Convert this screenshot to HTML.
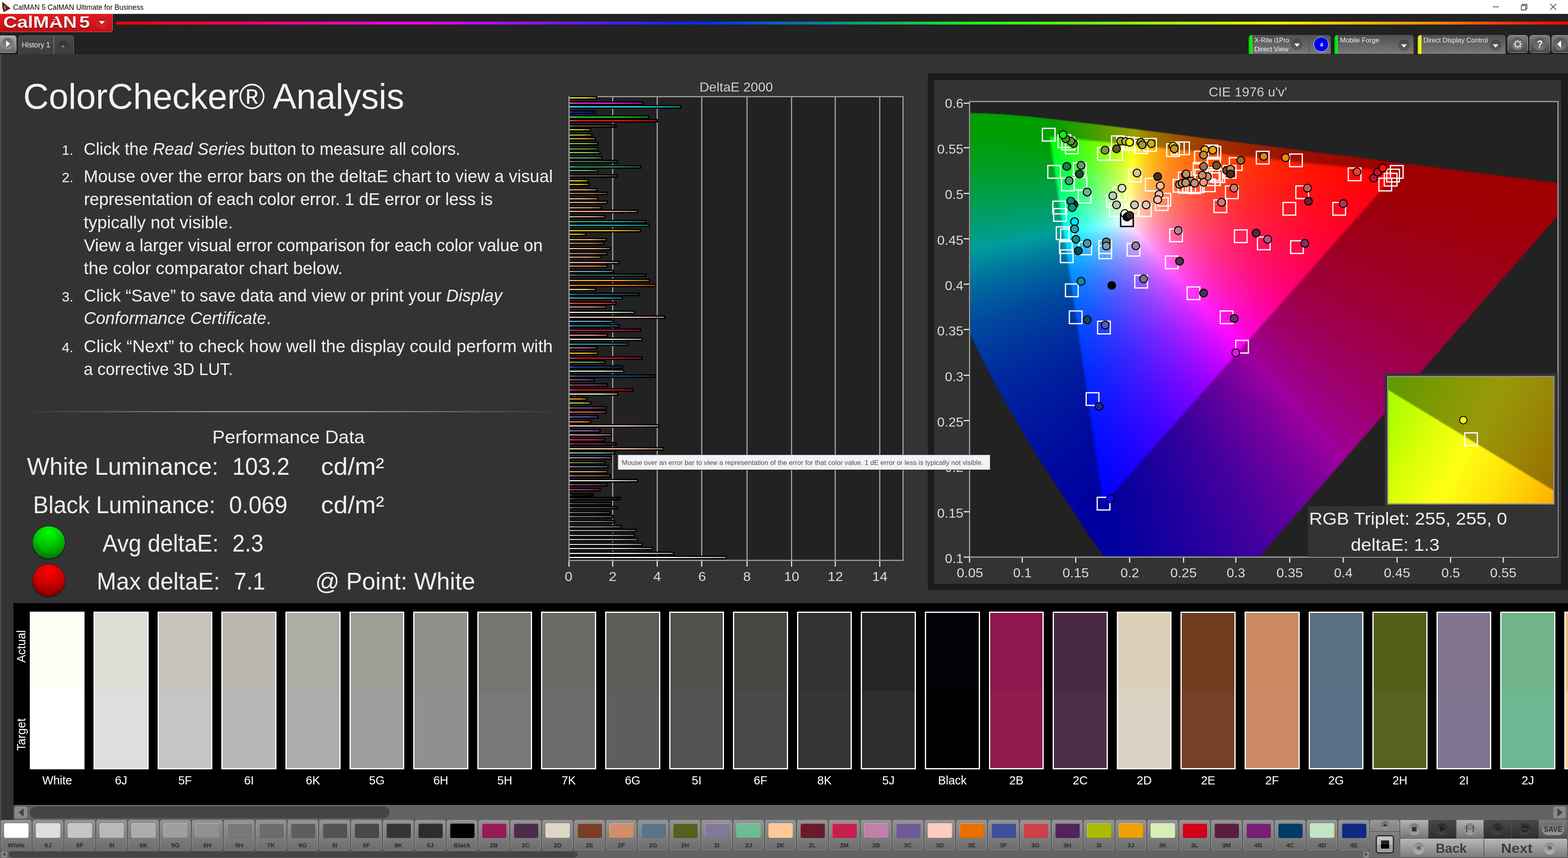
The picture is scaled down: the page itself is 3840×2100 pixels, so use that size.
<!DOCTYPE html>
<html lang="en"><head><meta charset="utf-8"><title>CalMAN 5 CalMAN Ultimate for Business</title>
<style>
html,body{margin:0;padding:0}
body{width:3840px;height:2100px;overflow:hidden;background:#333;position:relative;font-family:"Liberation Sans",sans-serif}
.t{position:absolute;white-space:nowrap;line-height:1;transform-origin:0 0}
.a{position:absolute}
i{font-style:italic}
</style></head><body>
<div class="a" style="left:0;top:0;width:3840px;height:34px;background:#fff"></div>
<svg class="a" style="left:3px;top:4px" width="24" height="26" viewBox="0 0 24 26">
<defs><linearGradient id="ic" x1="0" y1="0" x2="1" y2="1"><stop offset="0" stop-color="#2a1208"/><stop offset=".45" stop-color="#c8200c"/><stop offset=".7" stop-color="#7a1a08"/><stop offset="1" stop-color="#123a10"/></linearGradient></defs>
<path d="M3,1.5 L22,16.5 L6,25 Q2,14 3,1.5Z" fill="url(#ic)" stroke="#1a0c06" stroke-width="1"/>
<circle cx="8.8" cy="15.6" r="4.8" fill="#1c0d08"/></svg>
<div class="t" style="left:9.0px;top:14.9px;font-size:10px;color:#e8d8b0;font-weight:700;">5</div>
<div class="t" style="left:31.5px;top:8.6px;font-size:18px;color:#000;transform:scaleX(0.9708);">CalMAN 5 CalMAN Ultimate for Business</div>
<svg class="a" style="left:3640px;top:0" width="200" height="34" viewBox="0 0 200 34" fill="none" stroke="#111" stroke-width="1.3">
<path d="M16,16.8H31"/><path d="M85.5,13.5h11v11h-11z M88.5,13.5v-3h11v11h-3"/><path d="M156.5,9.5l14.5,14.5M171,9.5l-14.5,14.5"/></svg>
<div class="a" style="left:0;top:34px;width:3840px;height:99px;background:#222"></div>
<div class="a" style="left:285px;top:53px;width:3555px;height:7px;background:linear-gradient(90deg,#ff0000 0,#ff00e6 20%,#0028ff 40%,#1af01a 59%,#f4f000 80%,#ff8a08 90.6%,#ff2c06 96.2%,#ff0400 100%)"></div>
<div class="a" style="left:-2px;top:34px;width:276px;height:43.5px;border-radius:0 0 7px 7px;border:1.5px solid #e8787c;border-top:none;background:linear-gradient(180deg,#e01c22 0,#d4161c 45%,#c01016 100%);box-shadow:0 1px 2px #000"></div>
<div class="a" style="left:234.5px;top:40.5px;width:29.5px;height:29.5px;border-radius:50%;background:radial-gradient(circle at 50% 35%,#c8141a,#d62026 70%,#e0383c)"></div>
<svg class="a" style="left:241px;top:50px" width="17" height="11" viewBox="0 0 17 11"><path d="M1,1.5H16L8.5,9.5Z" fill="#fff"/></svg>
<div class="t" style="left:8.0px;top:33.9px;font-size:40.5px;color:#ececec;font-weight:700;transform:scaleX(1.1598);text-shadow:0 2px 2px rgba(90,0,0,.7);">CalMAN<span style="margin-left:5px">5</span></div>
<svg class="a" style="left:124px;top:37px" width="18" height="22" viewBox="0 0 18 22"><g fill="none" stroke="#c8181e" stroke-width="2.2" stroke-linecap="round"><circle cx="10.5" cy="3.2" r="1.6" fill="#c8181e" stroke="none"/><path d="M10,6.5L7.5,12l3.5,3-1.5,4.5M7.5,12L4,16.5M5,8l4.5-1.2 3.5,2.8"/></g></svg>
<div class="a" style="left:-4px;top:87px;width:42px;height:40px;border-radius:6px;border:1.5px solid #d8d8d8;background:linear-gradient(180deg,#a8a8a8,#666)"></div>
<div class="a" style="left:4.5px;top:92.5px;width:28px;height:28px;border-radius:50%;background:linear-gradient(180deg,#666,#8c8c8c)"></div>
<svg class="a" style="left:14px;top:98px" width="12" height="18" viewBox="0 0 12 18"><path d="M1,1L10.5,9 1,17Z" fill="#fff"/></svg>
<div class="a" style="left:44.5px;top:87px;width:136px;height:46px;border-radius:6px 6px 0 0;border:1.5px solid #6e6e6e;border-bottom:none;background:linear-gradient(180deg,#4a4a4a,#3c3c3c);box-sizing:border-box"></div>
<div class="a" style="left:131px;top:88px;width:1.5px;height:45px;background:#6e6e6e"></div>
<div class="a" style="left:140.5px;top:99.5px;width:28px;height:28px;border-radius:50%;background:linear-gradient(180deg,#333,#444)"></div>
<div class="t" style="left:53.3px;top:101.9px;font-size:17.6px;color:#e0e0e0;">History 1</div>
<div class="t" style="left:149.5px;top:105.1px;font-size:17px;color:#9a9a9a;">+</div>
<div class="a" style="left:3058px;top:86.3px;width:201px;height:46px;border-radius:7px 7px 0 0;background:linear-gradient(180deg,#505050,#7a7a7a);overflow:hidden;box-shadow:inset 0 1px 0 #6a6a6a"><div style="position:absolute;left:0;top:0;width:8.5px;height:46px;background:linear-gradient(90deg,#0c0,#1f1)"></div></div>
<div class="a" style="left:3205px;top:89px;width:1.5px;height:44px;background:#555"></div>
<div class="a" style="left:3162.3px;top:95.3px;width:28px;height:28px;border-radius:50%;background:linear-gradient(180deg,#444,#606060)"></div><svg class="a" style="left:3168.8px;top:106.3px" width="15" height="9" viewBox="0 0 15 9"><path d="M0.5,0.5H14.5L7.5,8.5Z" fill="#fff"/></svg>
<div class="a" style="left:3217px;top:90px;width:35px;height:35px;border-radius:50%;background:#0000f2;border:1.7px solid #fff"></div>
<div class="t" style="left:3232.4px;top:102.8px;font-size:13.5px;color:#fff;font-weight:700;">4</div>
<div class="t" style="left:3071.5px;top:91.4px;font-size:15.6px;color:#eee;transform:scaleX(1.0112);">X-Rite i1Pro</div>
<div class="t" style="left:3071.5px;top:113.2px;font-size:15.6px;color:#eee;transform:scaleX(1.0626);">Direct View</div>
<div class="a" style="left:3267.6px;top:86.3px;width:194.9000000000001px;height:46px;border-radius:7px 7px 0 0;background:linear-gradient(180deg,#505050,#7a7a7a);overflow:hidden;box-shadow:inset 0 1px 0 #6a6a6a"><div style="position:absolute;left:0;top:0;width:8.5px;height:46px;background:linear-gradient(90deg,#0c0,#1f1)"></div></div>
<div class="a" style="left:3424.3px;top:96.5px;width:28px;height:28px;border-radius:50%;background:linear-gradient(180deg,#444,#606060)"></div><svg class="a" style="left:3430.8px;top:107.5px" width="15" height="9" viewBox="0 0 15 9"><path d="M0.5,0.5H14.5L7.5,8.5Z" fill="#fff"/></svg>
<div class="t" style="left:3281.5px;top:91.4px;font-size:15.6px;color:#eee;transform:scaleX(1.0493);">Mobile Forge</div>
<div class="a" style="left:3472.2px;top:86.3px;width:214.80000000000018px;height:46px;border-radius:7px 7px 0 0;background:linear-gradient(180deg,#505050,#7a7a7a);overflow:hidden;box-shadow:inset 0 1px 0 #6a6a6a"><div style="position:absolute;left:0;top:0;width:8.5px;height:46px;background:linear-gradient(90deg,#dd0,#ff2)"></div></div>
<div class="a" style="left:3648.7px;top:96.5px;width:28px;height:28px;border-radius:50%;background:linear-gradient(180deg,#444,#606060)"></div><svg class="a" style="left:3655.2px;top:107.5px" width="15" height="9" viewBox="0 0 15 9"><path d="M0.5,0.5H14.5L7.5,8.5Z" fill="#fff"/></svg>
<div class="t" style="left:3485.6px;top:91.4px;font-size:15.6px;color:#eee;transform:scaleX(1.0458);">Direct Display Control</div>
<div class="a" style="left:3691.6px;top:86.3px;width:50.40000000000009px;height:42.4px;border-radius:7px;border:1.3px solid #b0b0b0;box-sizing:border-box;background:linear-gradient(180deg,#7c7c7c,#484848)"></div><div class="a" style="left:3701.4px;top:92.3px;width:31px;height:31px;border-radius:50%;background:linear-gradient(180deg,#555,#7a7a7a)"></div>
<div class="a" style="left:3745.6px;top:86.3px;width:50.40000000000009px;height:42.4px;border-radius:7px;border:1.3px solid #b0b0b0;box-sizing:border-box;background:linear-gradient(180deg,#7c7c7c,#484848)"></div><div class="a" style="left:3755.2px;top:92.3px;width:31px;height:31px;border-radius:50%;background:linear-gradient(180deg,#555,#7a7a7a)"></div>
<div class="a" style="left:3799.6px;top:86.3px;width:50.40000000000009px;height:42.4px;border-radius:7px;border:1.3px solid #b0b0b0;box-sizing:border-box;background:linear-gradient(180deg,#7c7c7c,#484848)"></div><div class="a" style="left:3805.7px;top:92.3px;width:31px;height:31px;border-radius:50%;background:linear-gradient(180deg,#555,#7a7a7a)"></div>
<svg class="a" style="left:3704.9px;top:95.8px" width="24" height="24" viewBox="-12 -12 24 24"><g fill="#cfcfcf"><rect x="-1.8" y="-10.4" width="3.6" height="4.4" transform="rotate(0)"/><rect x="-1.8" y="-10.4" width="3.6" height="4.4" transform="rotate(45)"/><rect x="-1.8" y="-10.4" width="3.6" height="4.4" transform="rotate(90)"/><rect x="-1.8" y="-10.4" width="3.6" height="4.4" transform="rotate(135)"/><rect x="-1.8" y="-10.4" width="3.6" height="4.4" transform="rotate(180)"/><rect x="-1.8" y="-10.4" width="3.6" height="4.4" transform="rotate(225)"/><rect x="-1.8" y="-10.4" width="3.6" height="4.4" transform="rotate(270)"/><rect x="-1.8" y="-10.4" width="3.6" height="4.4" transform="rotate(315)"/></g><circle r="6.2" fill="none" stroke="#cfcfcf" stroke-width="2.6"/></svg>
<div class="t" style="left:3763.9px;top:97.1px;font-size:23px;color:#f4f4f4;font-weight:700;">?</div>
<svg class="a" style="left:3812px;top:98px" width="12" height="20" viewBox="0 0 12 20"><path d="M11,1L1.5,10 11,19Z" fill="#fff"/></svg>
<div class="a" style="left:0;top:133px;width:3px;height:1967px;background:#4a4a4a"></div>
<div class="t" style="left:57.0px;top:192.3px;font-size:87px;color:#f2f2f2;transform:scaleX(0.9933);">ColorChecker® Analysis</div>
<div class="t" style="left:151.5px;top:350.5px;font-size:33.5px;color:#f0f0f0;">1.</div>
<div class="t" style="left:151.5px;top:418.4px;font-size:33.5px;color:#f0f0f0;">2.</div>
<div class="t" style="left:151.5px;top:710.1px;font-size:33.5px;color:#f0f0f0;">3.</div>
<div class="t" style="left:151.5px;top:834.4px;font-size:33.5px;color:#f0f0f0;">4.</div>
<div class="t" style="left:205.4px;top:343.5px;font-size:41.8px;color:#f0f0f0;transform:scaleX(0.9827);">Click the <i>Read Series</i> button to measure all colors.</div>
<div class="t" style="left:205.4px;top:411.4px;font-size:41.8px;color:#f0f0f0;transform:scaleX(1.0092);">Mouse over the error bars on the deltaE chart to view a visual</div>
<div class="t" style="left:205.4px;top:467.4px;font-size:41.8px;color:#f0f0f0;">representation of each color error. 1 dE error or less is</div>
<div class="t" style="left:205.4px;top:523.9px;font-size:41.8px;color:#f0f0f0;transform:scaleX(1.0211);">typically not visible.</div>
<div class="t" style="left:205.4px;top:579.9px;font-size:41.8px;color:#f0f0f0;">View a larger visual error comparison for each color value on</div>
<div class="t" style="left:205.4px;top:636.4px;font-size:41.8px;color:#f0f0f0;transform:scaleX(1.0264);">the color comparator chart below.</div>
<div class="t" style="left:205.4px;top:703.1px;font-size:41.8px;color:#f0f0f0;">Click “Save” to save data and view or print your <i>Display</i></div>
<div class="t" style="left:205.4px;top:758.1px;font-size:41.8px;color:#f0f0f0;transform:scaleX(0.9924);"><i>Conformance Certificate</i>.</div>
<div class="t" style="left:205.4px;top:827.4px;font-size:41.8px;color:#f0f0f0;transform:scaleX(1.0259);">Click “Next” to check how well the display could perform with</div>
<div class="t" style="left:205.4px;top:883.0px;font-size:41.8px;color:#f0f0f0;transform:scaleX(0.9645);">a corrective 3D LUT.</div>
<div class="a" style="left:45px;top:1006px;width:1330px;height:3px;background:linear-gradient(90deg,rgba(140,140,140,0),#8a8a8a 35%,#8a8a8a 65%,rgba(140,140,140,0))"></div>
<div class="t" style="left:519.5px;top:1049.2px;font-size:43.5px;color:#f0f0f0;transform:scaleX(1.0567);">Performance Data</div>
<div class="t" style="left:66.4px;top:1112.2px;font-size:59.5px;color:#f0f0f0;transform:scaleX(0.9848);">White Luminance:</div>
<div class="t" style="left:569.4px;top:1112.2px;font-size:59.5px;color:#f0f0f0;transform:scaleX(0.9422);">103.2</div>
<div class="t" style="left:786.3px;top:1112.2px;font-size:59.5px;color:#f0f0f0;transform:scaleX(1.0420);">cd/m²</div>
<div class="t" style="left:81.2px;top:1205.8px;font-size:59.5px;color:#f0f0f0;transform:scaleX(0.9514);">Black Luminance:</div>
<div class="t" style="left:561.0px;top:1205.8px;font-size:59.5px;color:#f0f0f0;transform:scaleX(0.9603);">0.069</div>
<div class="t" style="left:786.3px;top:1205.8px;font-size:59.5px;color:#f0f0f0;transform:scaleX(1.0420);">cd/m²</div>
<div class="t" style="left:251.0px;top:1299.5px;font-size:59.5px;color:#f0f0f0;transform:scaleX(0.9379);">Avg deltaE:</div>
<div class="t" style="left:569.4px;top:1299.5px;font-size:59.5px;color:#f0f0f0;transform:scaleX(0.9200);">2.3</div>
<div class="t" style="left:237.3px;top:1393.2px;font-size:59.5px;color:#f0f0f0;transform:scaleX(0.9612);">Max deltaE:</div>
<div class="t" style="left:573.4px;top:1393.2px;font-size:59.5px;color:#f0f0f0;transform:scaleX(0.9260);">7.1</div>
<div class="t" style="left:772.1px;top:1393.2px;font-size:59.5px;color:#f0f0f0;transform:scaleX(0.9849);">@ Point: White</div>
<div class="a" style="left:79.7px;top:1287.7px;width:79px;height:79px;border-radius:50%;background:radial-gradient(circle at 50% 18%,#00ff00 0,#00c400 45%,#005c00 100%);box-shadow:0 0 0 1.5px rgba(20,20,20,.55),0 2px 3px rgba(0,0,0,.5)"></div>
<div class="a" style="left:79.7px;top:1381.4px;width:79px;height:79px;border-radius:50%;background:radial-gradient(circle at 50% 18%,#ff0000 0,#d00000 45%,#5c0000 100%);box-shadow:0 0 0 1.5px rgba(20,20,20,.55),0 2px 3px rgba(0,0,0,.5)"></div>
<div class="t" style="left:1713.4px;top:197.8px;font-size:31.6px;color:#cfcfcf;transform:scaleX(1.0351);">DeltaE 2000</div>
<div class="a" style="left:1391.7px;top:235.3px;width:815.8px;height:1131.7px;background:#222;border:3px solid #999;box-sizing:content-box;margin:0"></div>
<div class="a" style="left:1498.7px;top:236.8px;width:3px;height:1134.7px;background:#999"></div><div class="a" style="left:1608.0px;top:236.8px;width:3px;height:1134.7px;background:#999"></div><div class="a" style="left:1717.4px;top:236.8px;width:3px;height:1134.7px;background:#999"></div><div class="a" style="left:1827.6px;top:236.8px;width:3px;height:1134.7px;background:#999"></div><div class="a" style="left:1936.9px;top:236.8px;width:3px;height:1134.7px;background:#999"></div><div class="a" style="left:2044.1px;top:236.8px;width:3px;height:1134.7px;background:#999"></div><div class="a" style="left:2153.0px;top:236.8px;width:3px;height:1134.7px;background:#999"></div><div class="a" style="left:1391.7px;top:1373.0px;width:3px;height:13.5px;background:#d6d6d6"></div><div class="a" style="left:1498.7px;top:1373.0px;width:3px;height:13.5px;background:#d6d6d6"></div><div class="a" style="left:1608.0px;top:1373.0px;width:3px;height:13.5px;background:#d6d6d6"></div><div class="a" style="left:1717.4px;top:1373.0px;width:3px;height:13.5px;background:#d6d6d6"></div><div class="a" style="left:1827.6px;top:1373.0px;width:3px;height:13.5px;background:#d6d6d6"></div><div class="a" style="left:1936.9px;top:1373.0px;width:3px;height:13.5px;background:#d6d6d6"></div><div class="a" style="left:2044.1px;top:1373.0px;width:3px;height:13.5px;background:#d6d6d6"></div><div class="a" style="left:2153.0px;top:1373.0px;width:3px;height:13.5px;background:#d6d6d6"></div>
<div class="a" style="left:0;top:0;width:3840px;height:1380px;filter:blur(.7px)"><div class="a" style="left:1394.7px;top:235.0px;width:68.7px;height:9.2px;background:#000"><div style="position:absolute;left:0;top:3.1px;right:3px;height:3px;background:linear-gradient(90deg,#f3ed57,#f0e820 12%,#f0e820 60%,#948f13)"></div></div><div class="a" style="left:1394.7px;top:247.8px;width:181.8px;height:9.2px;background:#000"><div style="position:absolute;left:0;top:3.1px;right:3px;height:3px;background:linear-gradient(90deg,#f357f3,#f020f0 12%,#f020f0 60%,#941394)"></div></div><div class="a" style="left:1394.7px;top:256.9px;width:273.1px;height:9.2px;background:#000"><div style="position:absolute;left:0;top:3.1px;right:3px;height:3px;background:linear-gradient(90deg,#57f3f3,#20f0f0 12%,#20f0f0 60%,#139494)"></div></div><div class="a" style="left:1394.7px;top:269.7px;width:65.8px;height:9.2px;background:#000"><div style="position:absolute;left:0;top:3.1px;right:3px;height:3px;background:linear-gradient(90deg,#4e4ef3,#1414f0 12%,#1414f0 60%,#0c0c94)"></div></div><div class="a" style="left:1394.7px;top:281.8px;width:195.0px;height:9.2px;background:#000"><div style="position:absolute;left:0;top:3.1px;right:3px;height:3px;background:linear-gradient(90deg,#57e757,#20e020 12%,#20e020 60%,#138a13)"></div></div><div class="a" style="left:1394.7px;top:291.0px;width:216.3px;height:9.2px;background:#000"><div style="position:absolute;left:0;top:3.1px;right:3px;height:3px;background:linear-gradient(90deg,#f35151,#f01818 12%,#f01818 60%,#940e0e)"></div></div><div class="a" style="left:1394.7px;top:303.7px;width:115.8px;height:9.2px;background:#000"><div style="position:absolute;left:0;top:3.1px;right:3px;height:3px;background:linear-gradient(90deg,#8f776b,#6a4a3a 12%,#6a4a3a 60%,#412d23)"></div></div><div class="a" style="left:1394.7px;top:312.9px;width:53.8px;height:9.2px;background:#000"><div style="position:absolute;left:0;top:3.1px;right:3px;height:3px;background:linear-gradient(90deg,#cfd55d,#c0c828 12%,#c0c828 60%,#777c18)"></div></div><div class="a" style="left:1394.7px;top:325.9px;width:56.8px;height:9.2px;background:#000"><div style="position:absolute;left:0;top:3.1px;right:3px;height:3px;background:linear-gradient(90deg,#c9c36f,#b8b040 12%,#b8b040 60%,#726d27)"></div></div><div class="a" style="left:1394.7px;top:334.8px;width:65.8px;height:9.2px;background:#000"><div style="position:absolute;left:0;top:3.1px;right:3px;height:3px;background:linear-gradient(90deg,#e7b17b,#e09850 12%,#e09850 60%,#8a5e31)"></div></div><div class="a" style="left:1394.7px;top:347.4px;width:71.7px;height:9.2px;background:#000"><div style="position:absolute;left:0;top:3.1px;right:3px;height:3px;background:linear-gradient(90deg,#93c975,#70b848 12%,#70b848 60%,#45722c)"></div></div><div class="a" style="left:1394.7px;top:359.7px;width:71.7px;height:9.2px;background:#000"><div style="position:absolute;left:0;top:3.1px;right:3px;height:3px;background:linear-gradient(90deg,#87b769,#60a038 12%,#60a038 60%,#3b6322)"></div></div><div class="a" style="left:1394.7px;top:369.1px;width:76.0px;height:9.2px;background:#000"><div style="position:absolute;left:0;top:3.1px;right:3px;height:3px;background:linear-gradient(90deg,#b1c97b,#98b850 12%,#98b850 60%,#5e7231)"></div></div><div class="a" style="left:1394.7px;top:381.7px;width:81.7px;height:9.2px;background:#000"><div style="position:absolute;left:0;top:3.1px;right:3px;height:3px;background:linear-gradient(90deg,#81bd99,#58a878 12%,#58a878 60%,#36684a)"></div></div><div class="a" style="left:1394.7px;top:391.0px;width:119.0px;height:9.2px;background:#000"><div style="position:absolute;left:0;top:3.1px;right:3px;height:3px;background:linear-gradient(90deg,#7b9381,#507058 12%,#507058 60%,#314536)"></div></div><div class="a" style="left:1394.7px;top:403.8px;width:176.0px;height:9.2px;background:#000"><div style="position:absolute;left:0;top:3.1px;right:3px;height:3px;background:linear-gradient(90deg,#5db18d,#289868 12%,#289868 60%,#185e40)"></div></div><div class="a" style="left:1394.7px;top:413.0px;width:71.7px;height:9.2px;background:#000"><div style="position:absolute;left:0;top:3.1px;right:3px;height:3px;background:linear-gradient(90deg,#93bd93,#70a870 12%,#70a870 60%,#456845)"></div></div><div class="a" style="left:1394.7px;top:425.7px;width:119.0px;height:9.2px;background:#000"><div style="position:absolute;left:0;top:3.1px;right:3px;height:3px;background:linear-gradient(90deg,#8d8175,#685848 12%,#685848 60%,#40362c)"></div></div><div class="a" style="left:1394.7px;top:437.9px;width:47.0px;height:9.2px;background:#000"><div style="position:absolute;left:0;top:3.1px;right:3px;height:3px;background:linear-gradient(90deg,#e1db57,#d8d020 12%,#d8d020 60%,#858013)"></div></div><div class="a" style="left:1394.7px;top:447.4px;width:49.8px;height:9.2px;background:#000"><div style="position:absolute;left:0;top:3.1px;right:3px;height:3px;background:linear-gradient(90deg,#e7c357,#e0b020 12%,#e0b020 60%,#8a6d13)"></div></div><div class="a" style="left:1394.7px;top:459.8px;width:68.7px;height:9.2px;background:#000"><div style="position:absolute;left:0;top:3.1px;right:3px;height:3px;background:linear-gradient(90deg,#e7b799,#e0a078 12%,#e0a078 60%,#8a634a)"></div></div><div class="a" style="left:1394.7px;top:469.2px;width:93.9px;height:9.2px;background:#000"><div style="position:absolute;left:0;top:3.1px;right:3px;height:3px;background:linear-gradient(90deg,#b7937b,#a07050 12%,#a07050 60%,#634531)"></div></div><div class="a" style="left:1394.7px;top:481.5px;width:71.7px;height:9.2px;background:#000"><div style="position:absolute;left:0;top:3.1px;right:3px;height:3px;background:linear-gradient(90deg,#e7bda5,#e0a888 12%,#e0a888 60%,#8a6854)"></div></div><div class="a" style="left:1394.7px;top:490.9px;width:93.9px;height:9.2px;background:#000"><div style="position:absolute;left:0;top:3.1px;right:3px;height:3px;background:linear-gradient(90deg,#e7b79f,#e0a080 12%,#e0a080 60%,#8a634f)"></div></div><div class="a" style="left:1394.7px;top:503.6px;width:79.0px;height:9.2px;background:#000"><div style="position:absolute;left:0;top:3.1px;right:3px;height:3px;background:linear-gradient(90deg,#dbb199,#d09878 12%,#d09878 60%,#805e4a)"></div></div><div class="a" style="left:1394.7px;top:512.6px;width:168.8px;height:9.2px;background:#000"><div style="position:absolute;left:0;top:3.1px;right:3px;height:3px;background:linear-gradient(90deg,#f3bdab,#f0a890 12%,#f0a890 60%,#946859)"></div></div><div class="a" style="left:1394.7px;top:525.6px;width:87.9px;height:9.2px;background:#000"><div style="position:absolute;left:0;top:3.1px;right:3px;height:3px;background:linear-gradient(90deg,#e1b79f,#d8a080 12%,#d8a080 60%,#85634f)"></div></div><div class="a" style="left:1394.7px;top:537.8px;width:188.0px;height:9.2px;background:#000"><div style="position:absolute;left:0;top:3.1px;right:3px;height:3px;background:linear-gradient(90deg,#5db7a5,#28a088 12%,#28a088 60%,#186354)"></div></div><div class="a" style="left:1394.7px;top:547.1px;width:197.8px;height:9.2px;background:#000"><div style="position:absolute;left:0;top:3.1px;right:3px;height:3px;background:linear-gradient(90deg,#57c3b7,#20b0a0 12%,#20b0a0 60%,#136d63)"></div></div><div class="a" style="left:1394.7px;top:559.7px;width:175.8px;height:9.2px;background:#000"><div style="position:absolute;left:0;top:3.1px;right:3px;height:3px;background:linear-gradient(90deg,#f3cf57,#f0c020 12%,#f0c020 60%,#947713)"></div></div><div class="a" style="left:1394.7px;top:568.8px;width:41.1px;height:9.2px;background:#000"><div style="position:absolute;left:0;top:3.1px;right:3px;height:3px;background:linear-gradient(90deg,#d5cf57,#c8c020 12%,#c8c020 60%,#7c7713)"></div></div><div class="a" style="left:1394.7px;top:581.6px;width:90.9px;height:9.2px;background:#000"><div style="position:absolute;left:0;top:3.1px;right:3px;height:3px;background:linear-gradient(90deg,#e7b799,#e0a078 12%,#e0a078 60%,#8a634a)"></div></div><div class="a" style="left:1394.7px;top:590.8px;width:84.9px;height:9.2px;background:#000"><div style="position:absolute;left:0;top:3.1px;right:3px;height:3px;background:linear-gradient(90deg,#cf9f75,#c08048 12%,#c08048 60%,#774f2c)"></div></div><div class="a" style="left:1394.7px;top:603.8px;width:100.9px;height:9.2px;background:#000"><div style="position:absolute;left:0;top:3.1px;right:3px;height:3px;background:linear-gradient(90deg,#e7c3ab,#e0b090 12%,#e0b090 60%,#8a6d59)"></div></div><div class="a" style="left:1394.7px;top:615.7px;width:93.9px;height:9.2px;background:#000"><div style="position:absolute;left:0;top:3.1px;right:3px;height:3px;background:linear-gradient(90deg,#c39f87,#b08060 12%,#b08060 60%,#6d4f3b)"></div></div><div class="a" style="left:1394.7px;top:625.3px;width:79.0px;height:9.2px;background:#000"><div style="position:absolute;left:0;top:3.1px;right:3px;height:3px;background:linear-gradient(90deg,#dbb799,#d0a078 12%,#d0a078 60%,#80634a)"></div></div><div class="a" style="left:1394.7px;top:637.6px;width:123.0px;height:9.2px;background:#000"><div style="position:absolute;left:0;top:3.1px;right:3px;height:3px;background:linear-gradient(90deg,#f3c3ab,#f0b090 12%,#f0b090 60%,#946d59)"></div></div><div class="a" style="left:1394.7px;top:647.2px;width:93.9px;height:9.2px;background:#000"><div style="position:absolute;left:0;top:3.1px;right:3px;height:3px;background:linear-gradient(90deg,#e7a581,#e08858 12%,#e08858 60%,#8a5436)"></div></div><div class="a" style="left:1394.7px;top:659.5px;width:109.8px;height:9.2px;background:#000"><div style="position:absolute;left:0;top:3.1px;right:3px;height:3px;background:linear-gradient(90deg,#9fb1c9,#8098b8 12%,#8098b8 60%,#4f5e72)"></div></div><div class="a" style="left:1394.7px;top:668.9px;width:188.0px;height:9.2px;background:#000"><div style="position:absolute;left:0;top:3.1px;right:3px;height:3px;background:linear-gradient(90deg,#5d8781,#286058 12%,#286058 60%,#183b36)"></div></div><div class="a" style="left:1394.7px;top:681.7px;width:197.8px;height:9.2px;background:#000"><div style="position:absolute;left:0;top:3.1px;right:3px;height:3px;background:linear-gradient(90deg,#f3bd5d,#f0a828 12%,#f0a828 60%,#946818)"></div></div><div class="a" style="left:1394.7px;top:693.8px;width:212.7px;height:9.2px;background:#000"><div style="position:absolute;left:0;top:3.1px;right:3px;height:3px;background:linear-gradient(90deg,#f39351,#f07018 12%,#f07018 60%,#94450e)"></div></div><div class="a" style="left:1394.7px;top:703.6px;width:65.8px;height:9.2px;background:#000"><div style="position:absolute;left:0;top:3.1px;right:3px;height:3px;background:linear-gradient(90deg,#e7e19f,#e0d880 12%,#e0d880 60%,#8a854f)"></div></div><div class="a" style="left:1394.7px;top:715.7px;width:172.8px;height:9.2px;background:#000"><div style="position:absolute;left:0;top:3.1px;right:3px;height:3px;background:linear-gradient(90deg,#57818d,#205868 12%,#205868 60%,#133640)"></div></div><div class="a" style="left:1394.7px;top:725.3px;width:131.8px;height:9.2px;background:#000"><div style="position:absolute;left:0;top:3.1px;right:3px;height:3px;background:linear-gradient(90deg,#6fbdc3,#40a8b0 12%,#40a8b0 60%,#27686d)"></div></div><div class="a" style="left:1394.7px;top:737.7px;width:115.8px;height:9.2px;background:#000"><div style="position:absolute;left:0;top:3.1px;right:3px;height:3px;background:linear-gradient(90deg,#ed695d,#e83828 12%,#e83828 60%,#8f2218)"></div></div><div class="a" style="left:1394.7px;top:747.0px;width:90.9px;height:9.2px;background:#000"><div style="position:absolute;left:0;top:3.1px;right:3px;height:3px;background:linear-gradient(90deg,#e7a599,#e08878 12%,#e08878 60%,#8a544a)"></div></div><div class="a" style="left:1394.7px;top:759.8px;width:159.9px;height:9.2px;background:#000"><div style="position:absolute;left:0;top:3.1px;right:3px;height:3px;background:linear-gradient(90deg,#e1f3e7,#d8f0e0 12%,#d8f0e0 60%,#85948a)"></div></div><div class="a" style="left:1394.7px;top:771.9px;width:234.8px;height:9.2px;background:#000"><div style="position:absolute;left:0;top:3.1px;right:3px;height:3px;background:linear-gradient(90deg,#f9dbcf,#f8d0c0 12%,#f8d0c0 60%,#998077)"></div></div><div class="a" style="left:1394.7px;top:781.7px;width:109.8px;height:9.2px;background:#000"><div style="position:absolute;left:0;top:3.1px;right:3px;height:3px;background:linear-gradient(90deg,#93bdcf,#70a8c0 12%,#70a8c0 60%,#456877)"></div></div><div class="a" style="left:1394.7px;top:792.6px;width:123.0px;height:9.2px;background:#000"><div style="position:absolute;left:0;top:3.1px;right:3px;height:3px;background:linear-gradient(90deg,#57a5c9,#2088b8 12%,#2088b8 60%,#135472)"></div></div><div class="a" style="left:1394.7px;top:803.7px;width:175.8px;height:9.2px;background:#000"><div style="position:absolute;left:0;top:3.1px;right:3px;height:3px;background:linear-gradient(90deg,#db5175,#d01848 12%,#d01848 60%,#800e2c)"></div></div><div class="a" style="left:1394.7px;top:815.8px;width:93.9px;height:9.2px;background:#000"><div style="position:absolute;left:0;top:3.1px;right:3px;height:3px;background:linear-gradient(90deg,#e7abb1,#e09098 12%,#e09098 60%,#8a595e)"></div></div><div class="a" style="left:1394.7px;top:825.6px;width:179.0px;height:9.2px;background:#000"><div style="position:absolute;left:0;top:3.1px;right:3px;height:3px;background:linear-gradient(90deg,#f9e7e1,#f8e0d8 12%,#f8e0d8 60%,#998a85)"></div></div><div class="a" style="left:1394.7px;top:838.0px;width:143.9px;height:9.2px;background:#000"><div style="position:absolute;left:0;top:3.1px;right:3px;height:3px;background:linear-gradient(90deg,#5db1b7,#2898a0 12%,#2898a0 60%,#185e63)"></div></div><div class="a" style="left:1394.7px;top:847.1px;width:68.7px;height:9.2px;background:#000"><div style="position:absolute;left:0;top:3.1px;right:3px;height:3px;background:linear-gradient(90deg,#db81a5,#d05888 12%,#d05888 60%,#803654)"></div></div><div class="a" style="left:1394.7px;top:859.9px;width:71.7px;height:9.2px;background:#000"><div style="position:absolute;left:0;top:3.1px;right:3px;height:3px;background:linear-gradient(90deg,#f3cf57,#f0c020 12%,#f0c020 60%,#947713)"></div></div><div class="a" style="left:1394.7px;top:872.0px;width:179.0px;height:9.2px;background:#000"><div style="position:absolute;left:0;top:3.1px;right:3px;height:3px;background:linear-gradient(90deg,#db5169,#d01838 12%,#d01838 60%,#800e22)"></div></div><div class="a" style="left:1394.7px;top:881.6px;width:87.9px;height:9.2px;background:#000"><div style="position:absolute;left:0;top:3.1px;right:3px;height:3px;background:linear-gradient(90deg,#8dc375,#68b048 12%,#68b048 60%,#406d2c)"></div></div><div class="a" style="left:1394.7px;top:893.8px;width:131.8px;height:9.2px;background:#000"><div style="position:absolute;left:0;top:3.1px;right:3px;height:3px;background:linear-gradient(90deg,#5d69a5,#283888 12%,#283888 60%,#182254)"></div></div><div class="a" style="left:1394.7px;top:903.6px;width:134.7px;height:9.2px;background:#000"><div style="position:absolute;left:0;top:3.1px;right:3px;height:3px;background:linear-gradient(90deg,#dbf3db,#d0f0d0 12%,#d0f0d0 60%,#809480)"></div></div><div class="a" style="left:1394.7px;top:915.9px;width:209.9px;height:9.2px;background:#000"><div style="position:absolute;left:0;top:3.1px;right:3px;height:3px;background:linear-gradient(90deg,#5d7b99,#285078 12%,#285078 60%,#18314a)"></div></div><div class="a" style="left:1394.7px;top:925.3px;width:62.8px;height:9.2px;background:#000"><div style="position:absolute;left:0;top:3.1px;right:3px;height:3px;background:linear-gradient(90deg,#b76fb7,#a040a0 12%,#a040a0 60%,#632763)"></div></div><div class="a" style="left:1394.7px;top:938.0px;width:93.9px;height:9.2px;background:#000"><div style="position:absolute;left:0;top:3.1px;right:3px;height:3px;background:linear-gradient(90deg,#9f7587,#804860 12%,#804860 60%,#4f2c3b)"></div></div><div class="a" style="left:1394.7px;top:950.2px;width:156.9px;height:9.2px;background:#000"><div style="position:absolute;left:0;top:3.1px;right:3px;height:3px;background:linear-gradient(90deg,#e75163,#e01830 12%,#e01830 60%,#8a0e1d)"></div></div><div class="a" style="left:1394.7px;top:959.8px;width:119.0px;height:9.2px;background:#000"><div style="position:absolute;left:0;top:3.1px;right:3px;height:3px;background:linear-gradient(90deg,#e7f9db,#e0f8d0 12%,#e0f8d0 60%,#8a9980)"></div></div><div class="a" style="left:1394.7px;top:971.9px;width:43.8px;height:9.2px;background:#000"><div style="position:absolute;left:0;top:3.1px;right:3px;height:3px;background:linear-gradient(90deg,#f3b757,#f0a020 12%,#f0a020 60%,#946313)"></div></div><div class="a" style="left:1394.7px;top:981.7px;width:53.8px;height:9.2px;background:#000"><div style="position:absolute;left:0;top:3.1px;right:3px;height:3px;background:linear-gradient(90deg,#cfdb63,#c0d030 12%,#c0d030 60%,#77801d)"></div></div><div class="a" style="left:1394.7px;top:993.8px;width:90.9px;height:9.2px;background:#000"><div style="position:absolute;left:0;top:3.1px;right:3px;height:3px;background:linear-gradient(90deg,#9f7b9f,#805080 12%,#805080 60%,#4f314f)"></div></div><div class="a" style="left:1394.7px;top:1003.6px;width:90.9px;height:9.2px;background:#000"><div style="position:absolute;left:0;top:3.1px;right:3px;height:3px;background:linear-gradient(90deg,#e78187,#e05860 12%,#e05860 60%,#8a363b)"></div></div><div class="a" style="left:1394.7px;top:1016.0px;width:71.7px;height:9.2px;background:#000"><div style="position:absolute;left:0;top:3.1px;right:3px;height:3px;background:linear-gradient(90deg,#7b87c3,#5060b0 12%,#5060b0 60%,#313b6d)"></div></div><div class="a" style="left:1394.7px;top:1028.3px;width:53.8px;height:9.2px;background:#000"><div style="position:absolute;left:0;top:3.1px;right:3px;height:3px;background:linear-gradient(90deg,#f3ab57,#f09020 12%,#f09020 60%,#945913)"></div></div><div class="a" style="left:1394.7px;top:1037.9px;width:219.9px;height:9.2px;background:#000"><div style="position:absolute;left:0;top:3.1px;right:3px;height:3px;background:linear-gradient(90deg,#ffe1e1,#ffd8d8 12%,#ffd8d8 60%,#9e8585)"></div></div><div class="a" style="left:1394.7px;top:1050.0px;width:76.0px;height:9.2px;background:#000"><div style="position:absolute;left:0;top:3.1px;right:3px;height:3px;background:linear-gradient(90deg,#9f8db7,#8068a0 12%,#8068a0 60%,#4f4063)"></div></div><div class="a" style="left:1394.7px;top:1059.8px;width:103.9px;height:9.2px;background:#000"><div style="position:absolute;left:0;top:3.1px;right:3px;height:3px;background:linear-gradient(90deg,#dbabc3,#d090b0 12%,#d090b0 60%,#80596d)"></div></div><div class="a" style="left:1394.7px;top:1071.9px;width:87.9px;height:9.2px;background:#000"><div style="position:absolute;left:0;top:3.1px;right:3px;height:3px;background:linear-gradient(90deg,#db5d87,#d02860 12%,#d02860 60%,#80183b)"></div></div><div class="a" style="left:1394.7px;top:1081.6px;width:115.8px;height:9.2px;background:#000"><div style="position:absolute;left:0;top:3.1px;right:3px;height:3px;background:linear-gradient(90deg,#9f5d75,#802848 12%,#802848 60%,#4f182c)"></div></div><div class="a" style="left:1394.7px;top:1093.9px;width:231.8px;height:9.2px;background:#000"><div style="position:absolute;left:0;top:3.1px;right:3px;height:3px;background:linear-gradient(90deg,#ffd5b7,#ffc8a0 12%,#ffc8a0 60%,#9e7c63)"></div></div><div class="a" style="left:1394.7px;top:1103.5px;width:112.8px;height:9.2px;background:#000"><div style="position:absolute;left:0;top:3.1px;right:3px;height:3px;background:linear-gradient(90deg,#93d5b7,#70c8a0 12%,#70c8a0 60%,#457c63)"></div></div><div class="a" style="left:1394.7px;top:1116.1px;width:103.9px;height:9.2px;background:#000"><div style="position:absolute;left:0;top:3.1px;right:3px;height:3px;background:linear-gradient(90deg,#ababc3,#9090b0 12%,#9090b0 60%,#59596d)"></div></div><div class="a" style="left:1394.7px;top:1128.2px;width:87.9px;height:9.2px;background:#000"><div style="position:absolute;left:0;top:3.1px;right:3px;height:3px;background:linear-gradient(90deg,#939f69,#708038 12%,#708038 60%,#454f22)"></div></div><div class="a" style="left:1394.7px;top:1137.8px;width:96.6px;height:9.2px;background:#000"><div style="position:absolute;left:0;top:3.1px;right:3px;height:3px;background:linear-gradient(90deg,#879fb7,#6080a0 12%,#6080a0 60%,#3b4f63)"></div></div><div class="a" style="left:1394.7px;top:1149.9px;width:93.9px;height:9.2px;background:#000"><div style="position:absolute;left:0;top:3.1px;right:3px;height:3px;background:linear-gradient(90deg,#e7b793,#e0a070 12%,#e0a070 60%,#8a6345)"></div></div><div class="a" style="left:1394.7px;top:1159.7px;width:100.9px;height:9.2px;background:#000"><div style="position:absolute;left:0;top:3.1px;right:3px;height:3px;background:linear-gradient(90deg,#b78d6f,#a06840 12%,#a06840 60%,#634027)"></div></div><div class="a" style="left:1394.7px;top:1171.8px;width:168.8px;height:9.2px;background:#000"><div style="position:absolute;left:0;top:3.1px;right:3px;height:3px;background:linear-gradient(90deg,#ede7db,#e8e0d0 12%,#e8e0d0 60%,#8f8a80)"></div></div><div class="a" style="left:1394.7px;top:1181.6px;width:93.9px;height:9.2px;background:#000"><div style="position:absolute;left:0;top:3.1px;right:3px;height:3px;background:linear-gradient(90deg,#93758d,#704868 12%,#704868 60%,#452c40)"></div></div><div class="a" style="left:1394.7px;top:1194.0px;width:76.0px;height:9.2px;background:#000"><div style="position:absolute;left:0;top:3.1px;right:3px;height:3px;background:linear-gradient(90deg,#c35d8d,#b02868 12%,#b02868 60%,#6d1840)"></div></div><div class="a" style="left:1394.7px;top:1206.5px;width:59.8px;height:9.2px;background:#000"><div style="position:absolute;left:0;top:3.1px;right:3px;height:3px;background:linear-gradient(90deg,#515151,#181818 12%,#181818 60%,#0e0e0e)"></div></div><div class="a" style="left:1394.7px;top:1215.7px;width:125.8px;height:9.2px;background:#000"><div style="position:absolute;left:0;top:3.1px;right:3px;height:3px;background:linear-gradient(90deg,#5f5f5f,#2a2a2a 12%,#2a2a2a 60%,#1a1a1a)"></div></div><div class="a" style="left:1394.7px;top:1227.8px;width:103.9px;height:9.2px;background:#000"><div style="position:absolute;left:0;top:3.1px;right:3px;height:3px;background:linear-gradient(90deg,#6f6f6f,#404040 12%,#404040 60%,#272727)"></div></div><div class="a" style="left:1394.7px;top:1237.8px;width:119.0px;height:9.2px;background:#000"><div style="position:absolute;left:0;top:3.1px;right:3px;height:3px;background:linear-gradient(90deg,#7b7b7b,#505050 12%,#505050 60%,#313131)"></div></div><div class="a" style="left:1394.7px;top:1249.8px;width:100.9px;height:9.2px;background:#000"><div style="position:absolute;left:0;top:3.1px;right:3px;height:3px;background:linear-gradient(90deg,#878787,#606060 12%,#606060 60%,#3b3b3b)"></div></div><div class="a" style="left:1394.7px;top:1259.8px;width:109.8px;height:9.2px;background:#000"><div style="position:absolute;left:0;top:3.1px;right:3px;height:3px;background:linear-gradient(90deg,#909090,#6c6c6c 12%,#6c6c6c 60%,#424242)"></div></div><div class="a" style="left:1394.7px;top:1272.1px;width:112.8px;height:9.2px;background:#000"><div style="position:absolute;left:0;top:3.1px;right:3px;height:3px;background:linear-gradient(90deg,#999999,#787878 12%,#787878 60%,#4a4a4a)"></div></div><div class="a" style="left:1394.7px;top:1284.7px;width:128.8px;height:9.2px;background:#000"><div style="position:absolute;left:0;top:3.1px;right:3px;height:3px;background:linear-gradient(90deg,#a5a5a5,#888888 12%,#888888 60%,#545454)"></div></div><div class="a" style="left:1394.7px;top:1293.8px;width:165.8px;height:9.2px;background:#000"><div style="position:absolute;left:0;top:3.1px;right:3px;height:3px;background:linear-gradient(90deg,#b1b1b1,#989898 12%,#989898 60%,#5e5e5e)"></div></div><div class="a" style="left:1394.7px;top:1306.2px;width:159.9px;height:9.2px;background:#000"><div style="position:absolute;left:0;top:3.1px;right:3px;height:3px;background:linear-gradient(90deg,#bdbdbd,#a8a8a8 12%,#a8a8a8 60%,#686868)"></div></div><div class="a" style="left:1394.7px;top:1315.5px;width:168.8px;height:9.2px;background:#000"><div style="position:absolute;left:0;top:3.1px;right:3px;height:3px;background:linear-gradient(90deg,#c3c3c3,#b0b0b0 12%,#b0b0b0 60%,#6d6d6d)"></div></div><div class="a" style="left:1394.7px;top:1327.9px;width:179.0px;height:9.2px;background:#000"><div style="position:absolute;left:0;top:3.1px;right:3px;height:3px;background:linear-gradient(90deg,#cfcfcf,#c0c0c0 12%,#c0c0c0 60%,#777777)"></div></div><div class="a" style="left:1394.7px;top:1337.9px;width:203.9px;height:9.2px;background:#000"><div style="position:absolute;left:0;top:3.1px;right:3px;height:3px;background:linear-gradient(90deg,#dbdbdb,#d0d0d0 12%,#d0d0d0 60%,#808080)"></div></div><div class="a" style="left:1394.7px;top:1350.0px;width:256.7px;height:9.2px;background:#000"><div style="position:absolute;left:0;top:3.1px;right:3px;height:3px;background:linear-gradient(90deg,#ededed,#e8e8e8 12%,#e8e8e8 60%,#8f8f8f)"></div></div><div class="a" style="left:1394.7px;top:1359.7px;width:385.6px;height:9.2px;background:#000"><div style="position:absolute;left:0;top:3.1px;right:3px;height:3px;background:linear-gradient(90deg,#ffffff,#ffffff 12%,#ffffff 60%,#9e9e9e)"></div></div></div>
<div class="t" style="left:1382.8px;top:1395.0px;font-size:32px;color:#dcdcdc;transform:scaleX(1.0620);">0</div>
<div class="t" style="left:1490.8px;top:1395.0px;font-size:32px;color:#dcdcdc;transform:scaleX(1.0620);">2</div>
<div class="t" style="left:1600.0px;top:1395.0px;font-size:32px;color:#dcdcdc;transform:scaleX(1.0620);">4</div>
<div class="t" style="left:1709.5px;top:1395.0px;font-size:32px;color:#dcdcdc;transform:scaleX(1.0620);">6</div>
<div class="t" style="left:1819.6px;top:1395.0px;font-size:32px;color:#dcdcdc;transform:scaleX(1.0620);">8</div>
<div class="t" style="left:1919.7px;top:1395.0px;font-size:32px;color:#dcdcdc;transform:scaleX(1.0507);">10</div>
<div class="t" style="left:2026.9px;top:1395.0px;font-size:32px;color:#dcdcdc;transform:scaleX(1.0507);">12</div>
<div class="t" style="left:2135.8px;top:1395.0px;font-size:32px;color:#dcdcdc;transform:scaleX(1.0507);">14</div>
<div class="a" style="left:2272px;top:179.5px;width:1568px;height:1264.5px;background:#1b1b1b"></div>
<div class="a" style="left:2288px;top:195.5px;width:1534.5px;height:1233px;background:#333"></div>
<div class="t" style="left:2959.6px;top:210.2px;font-size:31.7px;color:#cfcfcf;transform:scaleX(1.0295);">CIE 1976 u'v'</div>
<div class="a" style="left:2373.4px;top:247.3px;width:1437.9px;height:1111.7px;border:3px solid #999"></div>
<div class="a" style="left:2376.4px;top:250.3px;width:1437.9px;height:1111.7px;overflow:hidden;background:#222"><div style="position:absolute;left:0;top:0;width:1437.9px;height:1111.7px;filter:blur(1.2px)"><div style="position:absolute;left:0;top:0;width:1437.9px;height:1111.7px;clip-path:polygon(543.9px 1298.8px,541.0px 1300.2px,531.9px 1298.1px,486.1px 1257.8px,437.4px 1213.4px,355.6px 1149.7px,327.3px 1111.9px,317.2px 1097.7px,276.7px 1039.1px,236.3px 976.4px,195.8px 915.7px,155.4px 853.0px,114.9px 784.3px,74.5px 715.5px,34.0px 638.7px,-0.3px 567.9px,-31.4px 499.7px,-58.6px 419.3px,-101.1px 289.8px,-123.1px 193.6px,-128.4px 126.6px,-120.0px 80.6px,-100.1px 51.4px,-71.7px 36.5px,-38.1px 30.9px,-1.3px 26.6px,36.0px 27.1px,74.9px 29.1px,116.8px 32.5px,162.3px 37.0px,212.4px 42.6px,267.9px 49.2px,329.3px 56.8px,397.2px 65.3px,471.9px 74.8px,553.4px 85.2px,641.2px 96.4px,734.1px 108.1px,829.6px 120.4px,922.1px 132.1px,1012.2px 143.6px,1093.8px 153.9px,1165.9px 163.1px,1227.3px 171.0px,1278.7px 177.5px,1322.0px 183.0px,1359.6px 187.8px,1391.3px 191.9px,1417.0px 195.1px,1436.9px 197.6px,1452.5px 199.6px,1464.1px 201.1px,1487.6px 204.1px,1501.8px 205.3px)"><div style="position:absolute;left:0;top:0;width:1437.9px;height:1111.7px;clip-path:polygon(381.0px 294.5px,4413.8px 4737.1px,7201.1px -2013.4px,887.2px -5684.1px);background:conic-gradient(at 326.3px 984.2px,#00ff00 0deg,#00ff00 4deg,#00fb00 5deg,#00e200 6deg,#00cc00 7deg,#00a900 9deg,#008d00 11deg,#007700 13deg,#005500 17deg,#003d00 21deg,#002b00 25deg,#001600 31deg,#000200 40deg,#000000 45deg,#000000 261deg,#00ff00 262deg,#00ff00 360deg),conic-gradient(at 194.5px 83.6px,#000000 0deg,#000000 96deg,#00001a 104deg,#00003c 112deg,#000060 119deg,#000086 125deg,#0000b6 131deg,#0000de 135deg,#0000ff 138deg,#0000ff 261deg,#000000 262deg,#000000 360deg),#f00;background-blend-mode:screen,screen,normal"></div><div style="position:absolute;left:0;top:0;width:1437.9px;height:1111.7px;clip-path:polygon(387.7px 295.9px,-5513.4px 1380.7px,-4945.1px -4541.6px,894.0px -5682.7px);background:conic-gradient(at 326.3px 984.2px,#8a0000 0deg,#cf0000 3deg,#ff0000 5deg,#ff0000 131deg,#000000 132deg,#000000 351deg,#030000 352deg,#1e0000 354deg,#3e0000 356deg,#620000 358deg,#8a0000 360deg),conic-gradient(at 1045.5px 171.8px,#000000 0deg,#000000 131deg,#0000ff 132deg,#0000ff 259deg,#0000f5 260deg,#0000b7 263deg,#000081 266deg,#000052 269deg,#00001e 273deg,#000008 275deg,#000000 276deg,#000000 360deg),#0f0;background-blend-mode:screen,screen,normal"></div><div style="position:absolute;left:0;top:0;width:1437.9px;height:1111.7px;clip-path:polygon(386.1px 289.4px,-5515.1px 1374.2px,-1919.5px 7110.3px,4418.8px 4732.0px);background:conic-gradient(at 194.5px 83.6px,#000000 0deg,#000000 5deg,#ff0000 6deg,#ff0000 137deg,#fc0000 138deg,#cd0000 142deg,#9d0000 147deg,#730000 152deg,#420000 159deg,#1a0000 166deg,#020000 171deg,#000000 173deg,#000000 360deg),conic-gradient(at 1045.5px 171.8px,#00ff00 0deg,#00ff00 5deg,#000000 6deg,#000100 222deg,#000b00 227deg,#002600 236deg,#004000 242deg,#005800 246deg,#007600 250deg,#009500 253deg,#00bc00 256deg,#00de00 258deg,#00f200 259deg,#00ff00 260deg,#00ff00 360deg),#00f;background-blend-mode:screen,screen,normal"></div><svg style="position:absolute;left:-40px;top:-40px;filter:blur(2px)" width="1517.9" height="1191.7" viewBox="-40 -40 1517.9 1191.7"><path fill-rule="evenodd" fill="#000" fill-opacity="0.38" d="M-40,-40H1477.9V1151.7H-40Z M1045.5,171.8 L194.5,83.6 L326.3,984.2Z"/></svg></div></div>
<svg style="position:absolute;left:0;top:0" width="1437.9" height="1111.7" viewBox="2376.4 250.3 1437.9 1111.7"><g fill="none" stroke="#fff" stroke-width="3"><rect x="2553.2" y="314.5" width="31" height="31"/><rect x="2591.6" y="330.3" width="31" height="31"/><rect x="2601.1" y="336.2" width="31" height="31"/><rect x="2609.7" y="345.8" width="31" height="31"/><rect x="2688.4" y="361.4" width="31" height="31"/><rect x="2718.2" y="361.4" width="31" height="31"/><rect x="2722.5" y="333.0" width="31" height="31"/><rect x="2735.3" y="335.2" width="31" height="31"/><rect x="2748.0" y="336.2" width="31" height="31"/><rect x="2760.8" y="337.3" width="31" height="31"/><rect x="2780.0" y="344.8" width="31" height="31"/><rect x="2801.2" y="339.4" width="31" height="31"/><rect x="2857.7" y="352.2" width="31" height="31"/><rect x="2869.4" y="347.9" width="31" height="31"/><rect x="2882.1" y="347.9" width="31" height="31"/><rect x="2566.4" y="405.4" width="31" height="31"/><rect x="2629.2" y="398.6" width="31" height="31"/><rect x="2630.9" y="434.2" width="31" height="31"/><rect x="2600.1" y="436.3" width="31" height="31"/><rect x="2764.0" y="414.6" width="31" height="31"/><rect x="2805.5" y="436.7" width="31" height="31"/><rect x="2886.4" y="421.4" width="31" height="31"/><rect x="2873.6" y="439.5" width="31" height="31"/><rect x="2897.0" y="440.5" width="31" height="31"/><rect x="2918.3" y="440.5" width="31" height="31"/><rect x="2641.2" y="466.1" width="31" height="31"/><rect x="2725.7" y="458.6" width="31" height="31"/><rect x="2710.8" y="476.7" width="31" height="31"/><rect x="2717.2" y="499.1" width="31" height="31"/><rect x="2758.7" y="498.0" width="31" height="31"/><rect x="2788.5" y="499.1" width="31" height="31"/><rect x="2830.0" y="484.2" width="31" height="31"/><rect x="2836.4" y="473.5" width="31" height="31"/><rect x="2578.8" y="492.7" width="31" height="31"/><rect x="2580.9" y="510.8" width="31" height="31"/><rect x="2587.3" y="555.5" width="31" height="31"/><rect x="2597.9" y="560.8" width="31" height="31"/><rect x="2865.1" y="560.8" width="31" height="31"/><rect x="2951.6" y="355.4" width="31" height="31"/><rect x="2959.0" y="358.6" width="31" height="31"/><rect x="2926.0" y="370.3" width="31" height="31"/><rect x="2957.9" y="385.2" width="31" height="31"/><rect x="2922.8" y="398.0" width="31" height="31"/><rect x="2927.1" y="415.0" width="31" height="31"/><rect x="2954.8" y="410.7" width="31" height="31"/><rect x="2963.3" y="415.0" width="31" height="31"/><rect x="2957.9" y="423.5" width="31" height="31"/><rect x="2968.6" y="416.1" width="31" height="31"/><rect x="2996.3" y="405.4" width="31" height="31"/><rect x="3011.2" y="386.3" width="31" height="31"/><rect x="2945.2" y="438.4" width="31" height="31"/><rect x="3001.6" y="455.4" width="31" height="31"/><rect x="2973.5" y="489.5" width="31" height="31"/><rect x="3077.2" y="370.7" width="31" height="31"/><rect x="3158.7" y="377.3" width="31" height="31"/><rect x="3174.0" y="455.4" width="31" height="31"/><rect x="3142.5" y="495.9" width="31" height="31"/><rect x="3264.5" y="495.9" width="31" height="31"/><rect x="3023.5" y="563.0" width="31" height="31"/><rect x="2886.0" y="442.0" width="31" height="31"/><rect x="2909.5" y="443.0" width="31" height="31"/><rect x="3302.3" y="411.5" width="31" height="31"/><rect x="3405.5" y="405.5" width="31" height="31"/><rect x="3396.5" y="414.5" width="31" height="31"/><rect x="3390.5" y="424.5" width="31" height="31"/><rect x="3377.4" y="436.5" width="31" height="31"/><rect x="2595.2" y="589.6" width="31" height="31"/><rect x="2597.3" y="612.0" width="31" height="31"/><rect x="2642.6" y="592.8" width="31" height="31"/><rect x="2691.6" y="589.6" width="31" height="31"/><rect x="2691.6" y="602.4" width="31" height="31"/><rect x="2760.8" y="596.0" width="31" height="31"/><rect x="2854.5" y="626.9" width="31" height="31"/><rect x="2779.5" y="674.1" width="31" height="31"/><rect x="2609.7" y="695.4" width="31" height="31"/><rect x="2907.7" y="702.5" width="31" height="31"/><rect x="2619.2" y="761.4" width="31" height="31"/><rect x="2688.4" y="786.5" width="31" height="31"/><rect x="3079.9" y="580.5" width="31" height="31"/><rect x="3161.2" y="589.6" width="31" height="31"/><rect x="2988.8" y="761.4" width="31" height="31"/><rect x="3026.7" y="833.4" width="31" height="31"/><rect x="2660.5" y="961.5" width="31" height="31"/><rect x="2687.5" y="1217.5" width="31" height="31"/></g><rect x="2744.8" y="523.6" width="31" height="31" fill="none" stroke="#000" stroke-width="3.4"/><circle cx="2723.1" cy="698.8" r="10.6" fill="#000"/><g stroke="#000" stroke-width="2.4"><circle cx="2629.4" cy="351.7" r="9.5" fill="#508828"/><circle cx="2623.0" cy="345.8" r="9.5" fill="#5a9a30"/><circle cx="2610.3" cy="340.0" r="9.5" fill="#4a9020"/><circle cx="2603.9" cy="330.0" r="9.5" fill="#10f010"/><circle cx="2706.7" cy="367.7" r="9.5" fill="#7a9840"/><circle cx="2734.8" cy="364.5" r="9.5" fill="#5a6020"/><circle cx="2744.8" cy="345.8" r="9.5" fill="#a0a810"/><circle cx="2757.1" cy="346.4" r="9.5" fill="#b0b818"/><circle cx="2766.7" cy="348.5" r="9.5" fill="#f8f010"/><circle cx="2794.4" cy="348.5" r="9.5" fill="#a8a020"/><circle cx="2797.6" cy="354.9" r="9.5" fill="#a09828"/><circle cx="2819.9" cy="351.7" r="9.5" fill="#c8b010"/><circle cx="2873.2" cy="357.7" r="9.5" fill="#f0b808"/><circle cx="2876.3" cy="364.5" r="9.5" fill="#b89820"/><circle cx="2613.0" cy="407.5" r="9.5" fill="#0c8060"/><circle cx="2647.9" cy="405.0" r="9.5" fill="#609868"/><circle cx="2643.9" cy="426.2" r="9.5" fill="#284838"/><circle cx="2618.8" cy="442.8" r="9.5" fill="#48a078"/><circle cx="2784.8" cy="423.7" r="9.5" fill="#d0c888"/><circle cx="2835.5" cy="432.6" r="9.5" fill="#3a3020"/><circle cx="2903.6" cy="427.3" r="9.5" fill="#c08860"/><circle cx="2889.1" cy="451.8" r="9.5" fill="#c08a68"/><circle cx="2895.5" cy="448.6" r="9.5" fill="#c08a68"/><circle cx="2904.0" cy="446.5" r="9.5" fill="#c88a68"/><circle cx="2916.8" cy="445.4" r="9.5" fill="#c88a68"/><circle cx="2925.7" cy="448.6" r="9.5" fill="#c88868"/><circle cx="2841.9" cy="455.0" r="9.5" fill="#ffb890"/><circle cx="2839.1" cy="476.3" r="9.5" fill="#f8b8a0"/><circle cx="2835.5" cy="489.0" r="9.5" fill="#f8c0b0"/><circle cx="2748.0" cy="460.9" r="9.5" fill="#d8e0c0"/><circle cx="2662.8" cy="470.5" r="9.5" fill="#70b098"/><circle cx="2725.6" cy="479.5" r="9.5" fill="#c0d0b8"/><circle cx="2734.8" cy="501.8" r="9.5" fill="#b8c8b0"/><circle cx="2778.9" cy="501.8" r="9.5" fill="#d0c8b8"/><circle cx="2807.2" cy="501.8" r="9.5" fill="#e0c8c0"/><circle cx="2630.5" cy="500.8" r="9.5" fill="#103828"/><circle cx="2622.6" cy="492.7" r="9.5" fill="#0a8878"/><circle cx="2626.2" cy="508.2" r="9.5" fill="#0c9088"/><circle cx="2632.0" cy="542.9" r="9.5" fill="#00e8f8"/><circle cx="2632.0" cy="560.8" r="9.5" fill="#3898a0"/><circle cx="2755.0" cy="523.1" r="9.5" fill="#ffffff"/><circle cx="2760.3" cy="531.6" r="9.5" fill="#181818"/><circle cx="2762.5" cy="529.5" r="9.5" fill="#202020"/><circle cx="2766.7" cy="527.4" r="9.5" fill="#303030"/><circle cx="2885.9" cy="564.6" r="9.5" fill="#c080a0"/><circle cx="2951.1" cy="366.6" r="9.5" fill="#f8a808"/><circle cx="2970.3" cy="367.7" r="9.5" fill="#e8a010"/><circle cx="2947.9" cy="379.8" r="9.5" fill="#c88830"/><circle cx="3039.0" cy="392.8" r="9.5" fill="#a06830"/><circle cx="2947.9" cy="407.5" r="9.5" fill="#a07048"/><circle cx="2979.8" cy="405.0" r="9.5" fill="#785030"/><circle cx="3004.3" cy="417.3" r="9.5" fill="#704828"/><circle cx="3013.9" cy="414.5" r="9.5" fill="#c88858"/><circle cx="3013.9" cy="426.2" r="9.5" fill="#4a2c1c"/><circle cx="2905.3" cy="426.2" r="9.5" fill="#c09068"/><circle cx="2957.5" cy="432.6" r="9.5" fill="#c88c68"/><circle cx="2944.7" cy="429.4" r="9.5" fill="#c88c68"/><circle cx="2947.9" cy="446.5" r="9.5" fill="#f09878"/><circle cx="2917.0" cy="443.3" r="9.5" fill="#c08868"/><circle cx="2904.3" cy="447.5" r="9.5" fill="#c89070"/><circle cx="2926.0" cy="448.6" r="9.5" fill="#c89070"/><circle cx="3022.4" cy="460.7" r="9.5" fill="#d87868"/><circle cx="2992.0" cy="495.4" r="9.5" fill="#d87880"/><circle cx="3095.2" cy="383.0" r="9.5" fill="#e08010"/><circle cx="3148.6" cy="386.2" r="9.5" fill="#f88010"/><circle cx="3202.3" cy="460.7" r="9.5" fill="#c85860"/><circle cx="3204.8" cy="492.7" r="9.5" fill="#6a2030"/><circle cx="3290.0" cy="498.6" r="9.5" fill="#b83060"/><circle cx="3076.7" cy="571.0" r="9.5" fill="#5a2840"/><circle cx="3323.7" cy="420.7" r="9.5" fill="#e84030"/><circle cx="3364.5" cy="436.2" r="9.5" fill="#c01038"/><circle cx="3374.0" cy="421.8" r="9.5" fill="#c01030"/><circle cx="3386.8" cy="411.5" r="9.5" fill="#ff1008"/><circle cx="2635.2" cy="586.0" r="9.5" fill="#0c8890"/><circle cx="2663.0" cy="596.0" r="9.5" fill="#5890a8"/><circle cx="2641.1" cy="614.3" r="9.5" fill="#0c4858"/><circle cx="2709.7" cy="592.4" r="9.5" fill="#6a7880"/><circle cx="2709.7" cy="602.4" r="9.5" fill="#8098b0"/><circle cx="2782.0" cy="601.9" r="9.5" fill="#9088a0"/><circle cx="2889.1" cy="639.6" r="9.5" fill="#4a3848"/><circle cx="2647.9" cy="688.8" r="9.5" fill="#1888a8"/><circle cx="2801.2" cy="682.8" r="9.5" fill="#806a98"/><circle cx="2663.0" cy="782.9" r="9.5" fill="#104858"/><circle cx="2707.1" cy="795.7" r="9.5" fill="#5060a0"/><circle cx="3104.8" cy="586.0" r="9.5" fill="#b05888"/><circle cx="3195.9" cy="596.0" r="9.5" fill="#8a2c60"/><circle cx="2947.9" cy="717.5" r="9.5" fill="#4a3050"/><circle cx="3023.0" cy="779.7" r="9.5" fill="#6a2868"/><circle cx="3026.7" cy="863.8" r="9.5" fill="#f010f0"/><circle cx="2692.0" cy="995.0" r="9.5" fill="#1828a0"/><circle cx="2720.0" cy="1221.0" r="9.5" fill="#0808f0"/></g></svg></div>
<div class="a" style="left:2360px;top:1361.9px;width:13.5px;height:3px;background:#dcdcdc"></div><div class="a" style="left:2360px;top:1250.6px;width:13.5px;height:3px;background:#dcdcdc"></div><div class="a" style="left:2360px;top:1139.3px;width:13.5px;height:3px;background:#dcdcdc"></div><div class="a" style="left:2360px;top:1028.0px;width:13.5px;height:3px;background:#dcdcdc"></div><div class="a" style="left:2360px;top:916.7px;width:13.5px;height:3px;background:#dcdcdc"></div><div class="a" style="left:2360px;top:805.4px;width:13.5px;height:3px;background:#dcdcdc"></div><div class="a" style="left:2360px;top:694.1px;width:13.5px;height:3px;background:#dcdcdc"></div><div class="a" style="left:2360px;top:582.8px;width:13.5px;height:3px;background:#dcdcdc"></div><div class="a" style="left:2360px;top:471.5px;width:13.5px;height:3px;background:#dcdcdc"></div><div class="a" style="left:2360px;top:360.2px;width:13.5px;height:3px;background:#dcdcdc"></div><div class="a" style="left:2360px;top:250.8px;width:13.5px;height:3px;background:#dcdcdc"></div><div class="a" style="left:2373.4px;top:1364.5px;width:3px;height:12.5px;background:#dcdcdc"></div><div class="a" style="left:2502.0px;top:1364.5px;width:3px;height:12.5px;background:#dcdcdc"></div><div class="a" style="left:2633.3px;top:1364.5px;width:3px;height:12.5px;background:#dcdcdc"></div><div class="a" style="left:2765.0px;top:1364.5px;width:3px;height:12.5px;background:#dcdcdc"></div><div class="a" style="left:2896.7px;top:1364.5px;width:3px;height:12.5px;background:#dcdcdc"></div><div class="a" style="left:3025.0px;top:1364.5px;width:3px;height:12.5px;background:#dcdcdc"></div><div class="a" style="left:3156.7px;top:1364.5px;width:3px;height:12.5px;background:#dcdcdc"></div><div class="a" style="left:3288.2px;top:1364.5px;width:3px;height:12.5px;background:#dcdcdc"></div><div class="a" style="left:3419.9px;top:1364.5px;width:3px;height:12.5px;background:#dcdcdc"></div><div class="a" style="left:3551.1px;top:1364.5px;width:3px;height:12.5px;background:#dcdcdc"></div><div class="a" style="left:3679.9px;top:1364.5px;width:3px;height:12.5px;background:#dcdcdc"></div>
<div class="t" style="left:2313.9px;top:1350.8px;font-size:32px;color:#dcdcdc;transform:scaleX(1.0206);">0.1</div>
<div class="t" style="left:2294.8px;top:1239.5px;font-size:32px;color:#dcdcdc;transform:scaleX(1.0356);">0.15</div>
<div class="t" style="left:2313.9px;top:1128.2px;font-size:32px;color:#dcdcdc;transform:scaleX(1.0206);">0.2</div>
<div class="t" style="left:2294.8px;top:1016.9px;font-size:32px;color:#dcdcdc;transform:scaleX(1.0356);">0.25</div>
<div class="t" style="left:2313.9px;top:905.6px;font-size:32px;color:#dcdcdc;transform:scaleX(1.0206);">0.3</div>
<div class="t" style="left:2294.8px;top:794.3px;font-size:32px;color:#dcdcdc;transform:scaleX(1.0356);">0.35</div>
<div class="t" style="left:2313.9px;top:683.0px;font-size:32px;color:#dcdcdc;transform:scaleX(1.0206);">0.4</div>
<div class="t" style="left:2294.8px;top:571.7px;font-size:32px;color:#dcdcdc;transform:scaleX(1.0356);">0.45</div>
<div class="t" style="left:2313.9px;top:460.4px;font-size:32px;color:#dcdcdc;transform:scaleX(1.0206);">0.5</div>
<div class="t" style="left:2294.8px;top:349.1px;font-size:32px;color:#dcdcdc;transform:scaleX(1.0356);">0.55</div>
<div class="t" style="left:2313.9px;top:236.7px;font-size:32px;color:#dcdcdc;transform:scaleX(1.0206);">0.6</div>
<div class="t" style="left:2342.5px;top:1386.1px;font-size:32px;color:#dcdcdc;transform:scaleX(1.0420);">0.05</div>
<div class="t" style="left:2480.7px;top:1386.1px;font-size:32px;color:#dcdcdc;transform:scaleX(1.0251);">0.1</div>
<div class="t" style="left:2602.4px;top:1386.1px;font-size:32px;color:#dcdcdc;transform:scaleX(1.0420);">0.15</div>
<div class="t" style="left:2743.7px;top:1386.1px;font-size:32px;color:#dcdcdc;transform:scaleX(1.0251);">0.2</div>
<div class="t" style="left:2865.8px;top:1386.1px;font-size:32px;color:#dcdcdc;transform:scaleX(1.0420);">0.25</div>
<div class="t" style="left:3003.7px;top:1386.1px;font-size:32px;color:#dcdcdc;transform:scaleX(1.0251);">0.3</div>
<div class="t" style="left:3125.8px;top:1386.1px;font-size:32px;color:#dcdcdc;transform:scaleX(1.0420);">0.35</div>
<div class="t" style="left:3266.9px;top:1386.1px;font-size:32px;color:#dcdcdc;transform:scaleX(1.0251);">0.4</div>
<div class="t" style="left:3389.0px;top:1386.1px;font-size:32px;color:#dcdcdc;transform:scaleX(1.0420);">0.45</div>
<div class="t" style="left:3529.8px;top:1386.1px;font-size:32px;color:#dcdcdc;transform:scaleX(1.0251);">0.5</div>
<div class="t" style="left:3649.0px;top:1386.1px;font-size:32px;color:#dcdcdc;transform:scaleX(1.0420);">0.55</div>
<div class="a" style="left:3390.7px;top:914px;width:424px;height:328px;background:#333"></div>
<div class="a" style="left:3396.6px;top:920px;width:410.7px;height:315.3px;box-sizing:border-box;border:3px solid #8e8e8e;overflow:hidden;background:linear-gradient(118deg,#9cff00 0,#b8ff00 14.6%,#e0ff08 32%,#ffff14 50%,#ffe208 72%,#ffb000 100%)">
<svg style="position:absolute;left:-20px;top:-20px;filter:blur(1.5px)" width="445" height="350" viewBox="-20 -20 445 350"><path d="M-20,-20H425V289.6L-20,19.4Z" fill="#000" fill-opacity=".4"/></svg>
<svg style="position:absolute;left:0;top:0" width="404" height="308" viewBox="0 0 404 308"><rect x="187" y="136.5" width="31" height="31" fill="none" stroke="#fff" stroke-width="3"/><circle cx="183.6" cy="105.3" r="9.2" fill="#ffee10" stroke="#000" stroke-width="2.2"/></svg></div>
<div class="a" style="left:3202.5px;top:1239px;width:612px;height:123.5px;background:#333"></div>
<div class="t" style="left:3205.5px;top:1249.0px;font-size:42.5px;color:#f2f2f2;transform:scaleX(1.0637);">RGB Triplet: 255, 255, 0</div>
<div class="t" style="left:3308.0px;top:1312.7px;font-size:42.5px;color:#f2f2f2;transform:scaleX(1.0713);">deltaE: 1.3</div>
<div class="a" style="left:1512.8px;top:1112.9px;width:911.8px;height:36.7px;box-sizing:border-box;background:#f1f2f7;border:1.5px solid #8a8a8a;box-shadow:1px 1px 2px rgba(0,0,0,.4)"></div>
<div class="t" style="left:1522.6px;top:1125.3px;font-size:16.6px;color:#575757;">Mouse over an error bar to view a representation of the error for that color value. 1 dE error or less is typically not visible.</div>
<div class="a" style="left:33px;top:1476px;width:3807px;height:494px;background:#000;overflow:hidden">
<div style="position:absolute;left:39.5px;top:20.7px;width:134.8px;height:386.2px;box-sizing:border-box;border:3px solid #fff;background:linear-gradient(180deg,#fcfff4 0,#fcfff4 50.2%,#ffffff 50.2%,#ffffff 100%)"></div><div style="position:absolute;left:196.1px;top:20.7px;width:134.8px;height:386.2px;box-sizing:border-box;border:3px solid #fff;background:linear-gradient(180deg,#deded6 0,#deded6 50.2%,#dedede 50.2%,#dedede 100%)"></div><div style="position:absolute;left:352.7px;top:20.7px;width:134.8px;height:386.2px;box-sizing:border-box;border:3px solid #fff;background:linear-gradient(180deg,#c6c3bb 0,#c6c3bb 50.2%,#c5c5c5 50.2%,#c5c5c5 100%)"></div><div style="position:absolute;left:509.3px;top:20.7px;width:134.8px;height:386.2px;box-sizing:border-box;border:3px solid #fff;background:linear-gradient(180deg,#bab7ae 0,#bab7ae 50.2%,#b8b8b8 50.2%,#b8b8b8 100%)"></div><div style="position:absolute;left:665.9px;top:20.7px;width:134.8px;height:386.2px;box-sizing:border-box;border:3px solid #fff;background:linear-gradient(180deg,#adaca5 0,#adaca5 50.2%,#adadad 50.2%,#adadad 100%)"></div><div style="position:absolute;left:822.5px;top:20.7px;width:134.8px;height:386.2px;box-sizing:border-box;border:3px solid #fff;background:linear-gradient(180deg,#9e9d96 0,#9e9d96 50.2%,#9e9e9e 50.2%,#9e9e9e 100%)"></div><div style="position:absolute;left:979.1px;top:20.7px;width:134.8px;height:386.2px;box-sizing:border-box;border:3px solid #fff;background:linear-gradient(180deg,#908f89 0,#908f89 50.2%,#909090 50.2%,#909090 100%)"></div><div style="position:absolute;left:1135.7px;top:20.7px;width:134.8px;height:386.2px;box-sizing:border-box;border:3px solid #fff;background:linear-gradient(180deg,#777570 0,#777570 50.2%,#787878 50.2%,#787878 100%)"></div><div style="position:absolute;left:1292.3px;top:20.7px;width:134.8px;height:386.2px;box-sizing:border-box;border:3px solid #fff;background:linear-gradient(180deg,#6b6a65 0,#6b6a65 50.2%,#6c6c6c 50.2%,#6c6c6c 100%)"></div><div style="position:absolute;left:1448.9px;top:20.7px;width:134.8px;height:386.2px;box-sizing:border-box;border:3px solid #fff;background:linear-gradient(180deg,#5d5c57 0,#5d5c57 50.2%,#5e5e5e 50.2%,#5e5e5e 100%)"></div><div style="position:absolute;left:1605.5px;top:20.7px;width:134.8px;height:386.2px;box-sizing:border-box;border:3px solid #fff;background:linear-gradient(180deg,#52514c 0,#52514c 50.2%,#535353 50.2%,#535353 100%)"></div><div style="position:absolute;left:1762.1px;top:20.7px;width:134.8px;height:386.2px;box-sizing:border-box;border:3px solid #fff;background:linear-gradient(180deg,#474642 0,#474642 50.2%,#494949 50.2%,#494949 100%)"></div><div style="position:absolute;left:1918.7px;top:20.7px;width:134.8px;height:386.2px;box-sizing:border-box;border:3px solid #fff;background:linear-gradient(180deg,#323231 0,#323231 50.2%,#353535 50.2%,#353535 100%)"></div><div style="position:absolute;left:2075.3px;top:20.7px;width:134.8px;height:386.2px;box-sizing:border-box;border:3px solid #fff;background:linear-gradient(180deg,#262524 0,#262524 50.2%,#2d2d2d 50.2%,#2d2d2d 100%)"></div><div style="position:absolute;left:2231.9px;top:20.7px;width:134.8px;height:386.2px;box-sizing:border-box;border:3px solid #fff;background:linear-gradient(180deg,#020108 0,#020108 50.2%,#000000 50.2%,#000000 100%)"></div><div style="position:absolute;left:2388.5px;top:20.7px;width:134.8px;height:386.2px;box-sizing:border-box;border:3px solid #fff;background:linear-gradient(180deg,#8e174e 0,#8e174e 50.2%,#901c50 50.2%,#901c50 100%)"></div><div style="position:absolute;left:2545.1px;top:20.7px;width:134.8px;height:386.2px;box-sizing:border-box;border:3px solid #fff;background:linear-gradient(180deg,#482842 0,#482842 50.2%,#4c2e4a 50.2%,#4c2e4a 100%)"></div><div style="position:absolute;left:2701.7px;top:20.7px;width:134.8px;height:386.2px;box-sizing:border-box;border:3px solid #fff;background:linear-gradient(180deg,#dcd0b8 0,#dcd0b8 50.2%,#dad2c2 50.2%,#dad2c2 100%)"></div><div style="position:absolute;left:2858.3px;top:20.7px;width:134.8px;height:386.2px;box-sizing:border-box;border:3px solid #fff;background:linear-gradient(180deg,#703c20 0,#703c20 50.2%,#744028 50.2%,#744028 100%)"></div><div style="position:absolute;left:3014.9px;top:20.7px;width:134.8px;height:386.2px;box-sizing:border-box;border:3px solid #fff;background:linear-gradient(180deg,#cc8a62 0,#cc8a62 50.2%,#cc8a68 50.2%,#cc8a68 100%)"></div><div style="position:absolute;left:3171.5px;top:20.7px;width:134.8px;height:386.2px;box-sizing:border-box;border:3px solid #fff;background:linear-gradient(180deg,#5a7080 0,#5a7080 50.2%,#5a7086 50.2%,#5a7086 100%)"></div><div style="position:absolute;left:3328.1px;top:20.7px;width:134.8px;height:386.2px;box-sizing:border-box;border:3px solid #fff;background:linear-gradient(180deg,#546018 0,#546018 50.2%,#566220 50.2%,#566220 100%)"></div><div style="position:absolute;left:3484.7px;top:20.7px;width:134.8px;height:386.2px;box-sizing:border-box;border:3px solid #fff;background:linear-gradient(180deg,#82748c 0,#82748c 50.2%,#807692 50.2%,#807692 100%)"></div><div style="position:absolute;left:3641.3px;top:20.7px;width:134.8px;height:386.2px;box-sizing:border-box;border:3px solid #fff;background:linear-gradient(180deg,#70b488 0,#70b488 50.2%,#6cb892 50.2%,#6cb892 100%)"></div><div style="position:absolute;left:3797.9px;top:20.7px;width:134.8px;height:386.2px;box-sizing:border-box;border:3px solid #fff;background:linear-gradient(180deg,#f4b880 0,#f4b880 50.2%,#ffc898 50.2%,#ffc898 100%)"></div></div>
<div class="t" style="left:103.4px;top:1896.1px;font-size:28.6px;color:#fff;">White</div>
<div class="t" style="left:281.4px;top:1896.1px;font-size:28.6px;color:#fff;">6J</div>
<div class="t" style="left:436.4px;top:1896.1px;font-size:28.6px;color:#fff;">5F</div>
<div class="t" style="left:597.8px;top:1896.1px;font-size:28.6px;color:#fff;">6I</div>
<div class="t" style="left:748.8px;top:1896.1px;font-size:28.6px;color:#fff;">6K</div>
<div class="t" style="left:903.8px;top:1896.1px;font-size:28.6px;color:#fff;">5G</div>
<div class="t" style="left:1061.2px;top:1896.1px;font-size:28.6px;color:#fff;">6H</div>
<div class="t" style="left:1217.8px;top:1896.1px;font-size:28.6px;color:#fff;">5H</div>
<div class="t" style="left:1375.2px;top:1896.1px;font-size:28.6px;color:#fff;">7K</div>
<div class="t" style="left:1530.2px;top:1896.1px;font-size:28.6px;color:#fff;">6G</div>
<div class="t" style="left:1694.0px;top:1896.1px;font-size:28.6px;color:#fff;">5I</div>
<div class="t" style="left:1845.8px;top:1896.1px;font-size:28.6px;color:#fff;">6F</div>
<div class="t" style="left:2001.6px;top:1896.1px;font-size:28.6px;color:#fff;">8K</div>
<div class="t" style="left:2160.6px;top:1896.1px;font-size:28.6px;color:#fff;">5J</div>
<div class="t" style="left:2297.3px;top:1896.1px;font-size:28.6px;color:#fff;">Black</div>
<div class="t" style="left:2471.4px;top:1896.1px;font-size:28.6px;color:#fff;">2B</div>
<div class="t" style="left:2627.2px;top:1896.1px;font-size:28.6px;color:#fff;">2C</div>
<div class="t" style="left:2783.8px;top:1896.1px;font-size:28.6px;color:#fff;">2D</div>
<div class="t" style="left:2941.2px;top:1896.1px;font-size:28.6px;color:#fff;">2E</div>
<div class="t" style="left:3098.6px;top:1896.1px;font-size:28.6px;color:#fff;">2F</div>
<div class="t" style="left:3252.8px;top:1896.1px;font-size:28.6px;color:#fff;">2G</div>
<div class="t" style="left:3410.2px;top:1896.1px;font-size:28.6px;color:#fff;">2H</div>
<div class="t" style="left:3573.2px;top:1896.1px;font-size:28.6px;color:#fff;">2I</div>
<div class="t" style="left:3726.6px;top:1896.1px;font-size:28.6px;color:#fff;">2J</div>
<div class="t" style="left:38px;top:1622px;font-size:28.6px;color:#fff;transform:rotate(-90deg);transform-origin:0 0;width:80px;text-align:center">Actual</div>
<div class="t" style="left:38px;top:1838px;font-size:28.6px;color:#fff;transform:rotate(-90deg);transform-origin:0 0;width:80px;text-align:center">Target</div>
<div class="a" style="left:33px;top:1970px;width:3807px;height:37px;background:#636363;border-radius:6px 0 0 0"></div>
<div class="a" style="left:73.3px;top:1973.6px;width:881px;height:29.8px;border-radius:15px;background:#444"></div>
<div class="a" style="left:35.5px;top:1973.6px;width:31px;height:29.8px;border-radius:5px;background:#8a8a8a"></div><svg class="a" style="left:44px;top:1977px" width="15" height="23" viewBox="0 0 15 23"><path d="M14,1L1,11.5 14,22Z" fill="#444"/></svg>
<div class="a" style="left:3804px;top:1973.6px;width:31px;height:29.8px;border-radius:5px;background:#8a8a8a"></div><svg class="a" style="left:3813px;top:1977px" width="15" height="23" viewBox="0 0 15 23"><path d="M1,1L14,11.5 1,22Z" fill="#444"/></svg>
<div class="a" style="left:0;top:2006.5px;width:3840px;height:93.5px;background:#5a5a5a"></div>
<div class="a" style="left:2px;top:2007px;width:75px;height:73.5px;border-radius:5px;background:linear-gradient(180deg,#949494,#6c6c6c);box-shadow:inset 0 0 0 1px rgba(170,170,170,.6)"><div style="position:absolute;left:7.5px;top:8px;width:60px;height:35.5px;border-radius:4.5px;background:#ffffff;box-shadow:inset 1px 1.5px 1px rgba(255,255,255,.35),inset -1px -1px 1px rgba(0,0,0,.15)"></div></div><div class="a" style="left:80px;top:2007px;width:75px;height:73.5px;border-radius:5px;background:linear-gradient(180deg,#949494,#6c6c6c);box-shadow:inset 0 0 0 1px rgba(170,170,170,.6)"><div style="position:absolute;left:7.5px;top:8px;width:60px;height:35.5px;border-radius:4.5px;background:#dedede;box-shadow:inset 1px 1.5px 1px rgba(255,255,255,.35),inset -1px -1px 1px rgba(0,0,0,.15)"></div></div><div class="a" style="left:158px;top:2007px;width:75px;height:73.5px;border-radius:5px;background:linear-gradient(180deg,#949494,#6c6c6c);box-shadow:inset 0 0 0 1px rgba(170,170,170,.6)"><div style="position:absolute;left:7.5px;top:8px;width:60px;height:35.5px;border-radius:4.5px;background:#c5c5c5;box-shadow:inset 1px 1.5px 1px rgba(255,255,255,.35),inset -1px -1px 1px rgba(0,0,0,.15)"></div></div><div class="a" style="left:236px;top:2007px;width:75px;height:73.5px;border-radius:5px;background:linear-gradient(180deg,#949494,#6c6c6c);box-shadow:inset 0 0 0 1px rgba(170,170,170,.6)"><div style="position:absolute;left:7.5px;top:8px;width:60px;height:35.5px;border-radius:4.5px;background:#b8b8b8;box-shadow:inset 1px 1.5px 1px rgba(255,255,255,.35),inset -1px -1px 1px rgba(0,0,0,.15)"></div></div><div class="a" style="left:314px;top:2007px;width:75px;height:73.5px;border-radius:5px;background:linear-gradient(180deg,#949494,#6c6c6c);box-shadow:inset 0 0 0 1px rgba(170,170,170,.6)"><div style="position:absolute;left:7.5px;top:8px;width:60px;height:35.5px;border-radius:4.5px;background:#adadad;box-shadow:inset 1px 1.5px 1px rgba(255,255,255,.35),inset -1px -1px 1px rgba(0,0,0,.15)"></div></div><div class="a" style="left:392px;top:2007px;width:75px;height:73.5px;border-radius:5px;background:linear-gradient(180deg,#949494,#6c6c6c);box-shadow:inset 0 0 0 1px rgba(170,170,170,.6)"><div style="position:absolute;left:7.5px;top:8px;width:60px;height:35.5px;border-radius:4.5px;background:#9e9e9e;box-shadow:inset 1px 1.5px 1px rgba(255,255,255,.35),inset -1px -1px 1px rgba(0,0,0,.15)"></div></div><div class="a" style="left:470px;top:2007px;width:75px;height:73.5px;border-radius:5px;background:linear-gradient(180deg,#949494,#6c6c6c);box-shadow:inset 0 0 0 1px rgba(170,170,170,.6)"><div style="position:absolute;left:7.5px;top:8px;width:60px;height:35.5px;border-radius:4.5px;background:#909090;box-shadow:inset 1px 1.5px 1px rgba(255,255,255,.35),inset -1px -1px 1px rgba(0,0,0,.15)"></div></div><div class="a" style="left:548px;top:2007px;width:75px;height:73.5px;border-radius:5px;background:linear-gradient(180deg,#949494,#6c6c6c);box-shadow:inset 0 0 0 1px rgba(170,170,170,.6)"><div style="position:absolute;left:7.5px;top:8px;width:60px;height:35.5px;border-radius:4.5px;background:#787878;box-shadow:inset 1px 1.5px 1px rgba(255,255,255,.35),inset -1px -1px 1px rgba(0,0,0,.15)"></div></div><div class="a" style="left:626px;top:2007px;width:75px;height:73.5px;border-radius:5px;background:linear-gradient(180deg,#949494,#6c6c6c);box-shadow:inset 0 0 0 1px rgba(170,170,170,.6)"><div style="position:absolute;left:7.5px;top:8px;width:60px;height:35.5px;border-radius:4.5px;background:#6c6c6c;box-shadow:inset 1px 1.5px 1px rgba(255,255,255,.35),inset -1px -1px 1px rgba(0,0,0,.15)"></div></div><div class="a" style="left:704px;top:2007px;width:75px;height:73.5px;border-radius:5px;background:linear-gradient(180deg,#949494,#6c6c6c);box-shadow:inset 0 0 0 1px rgba(170,170,170,.6)"><div style="position:absolute;left:7.5px;top:8px;width:60px;height:35.5px;border-radius:4.5px;background:#5e5e5e;box-shadow:inset 1px 1.5px 1px rgba(255,255,255,.35),inset -1px -1px 1px rgba(0,0,0,.15)"></div></div><div class="a" style="left:782px;top:2007px;width:75px;height:73.5px;border-radius:5px;background:linear-gradient(180deg,#949494,#6c6c6c);box-shadow:inset 0 0 0 1px rgba(170,170,170,.6)"><div style="position:absolute;left:7.5px;top:8px;width:60px;height:35.5px;border-radius:4.5px;background:#535353;box-shadow:inset 1px 1.5px 1px rgba(255,255,255,.35),inset -1px -1px 1px rgba(0,0,0,.15)"></div></div><div class="a" style="left:860px;top:2007px;width:75px;height:73.5px;border-radius:5px;background:linear-gradient(180deg,#949494,#6c6c6c);box-shadow:inset 0 0 0 1px rgba(170,170,170,.6)"><div style="position:absolute;left:7.5px;top:8px;width:60px;height:35.5px;border-radius:4.5px;background:#494949;box-shadow:inset 1px 1.5px 1px rgba(255,255,255,.35),inset -1px -1px 1px rgba(0,0,0,.15)"></div></div><div class="a" style="left:938px;top:2007px;width:75px;height:73.5px;border-radius:5px;background:linear-gradient(180deg,#949494,#6c6c6c);box-shadow:inset 0 0 0 1px rgba(170,170,170,.6)"><div style="position:absolute;left:7.5px;top:8px;width:60px;height:35.5px;border-radius:4.5px;background:#353535;box-shadow:inset 1px 1.5px 1px rgba(255,255,255,.35),inset -1px -1px 1px rgba(0,0,0,.15)"></div></div><div class="a" style="left:1016px;top:2007px;width:75px;height:73.5px;border-radius:5px;background:linear-gradient(180deg,#949494,#6c6c6c);box-shadow:inset 0 0 0 1px rgba(170,170,170,.6)"><div style="position:absolute;left:7.5px;top:8px;width:60px;height:35.5px;border-radius:4.5px;background:#2d2d2d;box-shadow:inset 1px 1.5px 1px rgba(255,255,255,.35),inset -1px -1px 1px rgba(0,0,0,.15)"></div></div><div class="a" style="left:1094px;top:2007px;width:75px;height:73.5px;border-radius:5px;background:linear-gradient(180deg,#949494,#6c6c6c);box-shadow:inset 0 0 0 1px rgba(170,170,170,.6)"><div style="position:absolute;left:7.5px;top:8px;width:60px;height:35.5px;border-radius:4.5px;background:#000000;box-shadow:inset 1px 1.5px 1px rgba(255,255,255,.35),inset -1px -1px 1px rgba(0,0,0,.15)"></div></div><div class="a" style="left:1172px;top:2007px;width:75px;height:73.5px;border-radius:5px;background:linear-gradient(180deg,#949494,#6c6c6c);box-shadow:inset 0 0 0 1px rgba(170,170,170,.6)"><div style="position:absolute;left:7.5px;top:8px;width:60px;height:35.5px;border-radius:4.5px;background:#9a1a58;box-shadow:inset 1px 1.5px 1px rgba(255,255,255,.35),inset -1px -1px 1px rgba(0,0,0,.15)"></div></div><div class="a" style="left:1250px;top:2007px;width:75px;height:73.5px;border-radius:5px;background:linear-gradient(180deg,#949494,#6c6c6c);box-shadow:inset 0 0 0 1px rgba(170,170,170,.6)"><div style="position:absolute;left:7.5px;top:8px;width:60px;height:35.5px;border-radius:4.5px;background:#4a2c4a;box-shadow:inset 1px 1.5px 1px rgba(255,255,255,.35),inset -1px -1px 1px rgba(0,0,0,.15)"></div></div><div class="a" style="left:1328px;top:2007px;width:75px;height:73.5px;border-radius:5px;background:linear-gradient(180deg,#949494,#6c6c6c);box-shadow:inset 0 0 0 1px rgba(170,170,170,.6)"><div style="position:absolute;left:7.5px;top:8px;width:60px;height:35.5px;border-radius:4.5px;background:#ded6c4;box-shadow:inset 1px 1.5px 1px rgba(255,255,255,.35),inset -1px -1px 1px rgba(0,0,0,.15)"></div></div><div class="a" style="left:1406px;top:2007px;width:75px;height:73.5px;border-radius:5px;background:linear-gradient(180deg,#949494,#6c6c6c);box-shadow:inset 0 0 0 1px rgba(170,170,170,.6)"><div style="position:absolute;left:7.5px;top:8px;width:60px;height:35.5px;border-radius:4.5px;background:#783f26;box-shadow:inset 1px 1.5px 1px rgba(255,255,255,.35),inset -1px -1px 1px rgba(0,0,0,.15)"></div></div><div class="a" style="left:1484px;top:2007px;width:75px;height:73.5px;border-radius:5px;background:linear-gradient(180deg,#949494,#6c6c6c);box-shadow:inset 0 0 0 1px rgba(170,170,170,.6)"><div style="position:absolute;left:7.5px;top:8px;width:60px;height:35.5px;border-radius:4.5px;background:#d08e6a;box-shadow:inset 1px 1.5px 1px rgba(255,255,255,.35),inset -1px -1px 1px rgba(0,0,0,.15)"></div></div><div class="a" style="left:1562px;top:2007px;width:75px;height:73.5px;border-radius:5px;background:linear-gradient(180deg,#949494,#6c6c6c);box-shadow:inset 0 0 0 1px rgba(170,170,170,.6)"><div style="position:absolute;left:7.5px;top:8px;width:60px;height:35.5px;border-radius:4.5px;background:#5a748a;box-shadow:inset 1px 1.5px 1px rgba(255,255,255,.35),inset -1px -1px 1px rgba(0,0,0,.15)"></div></div><div class="a" style="left:1640px;top:2007px;width:75px;height:73.5px;border-radius:5px;background:linear-gradient(180deg,#949494,#6c6c6c);box-shadow:inset 0 0 0 1px rgba(170,170,170,.6)"><div style="position:absolute;left:7.5px;top:8px;width:60px;height:35.5px;border-radius:4.5px;background:#52621e;box-shadow:inset 1px 1.5px 1px rgba(255,255,255,.35),inset -1px -1px 1px rgba(0,0,0,.15)"></div></div><div class="a" style="left:1718px;top:2007px;width:75px;height:73.5px;border-radius:5px;background:linear-gradient(180deg,#949494,#6c6c6c);box-shadow:inset 0 0 0 1px rgba(170,170,170,.6)"><div style="position:absolute;left:7.5px;top:8px;width:60px;height:35.5px;border-radius:4.5px;background:#84789a;box-shadow:inset 1px 1.5px 1px rgba(255,255,255,.35),inset -1px -1px 1px rgba(0,0,0,.15)"></div></div><div class="a" style="left:1796px;top:2007px;width:75px;height:73.5px;border-radius:5px;background:linear-gradient(180deg,#949494,#6c6c6c);box-shadow:inset 0 0 0 1px rgba(170,170,170,.6)"><div style="position:absolute;left:7.5px;top:8px;width:60px;height:35.5px;border-radius:4.5px;background:#6cbc94;box-shadow:inset 1px 1.5px 1px rgba(255,255,255,.35),inset -1px -1px 1px rgba(0,0,0,.15)"></div></div><div class="a" style="left:1874px;top:2007px;width:75px;height:73.5px;border-radius:5px;background:linear-gradient(180deg,#949494,#6c6c6c);box-shadow:inset 0 0 0 1px rgba(170,170,170,.6)"><div style="position:absolute;left:7.5px;top:8px;width:60px;height:35.5px;border-radius:4.5px;background:#ffc898;box-shadow:inset 1px 1.5px 1px rgba(255,255,255,.35),inset -1px -1px 1px rgba(0,0,0,.15)"></div></div><div class="a" style="left:1952px;top:2007px;width:75px;height:73.5px;border-radius:5px;background:linear-gradient(180deg,#949494,#6c6c6c);box-shadow:inset 0 0 0 1px rgba(170,170,170,.6)"><div style="position:absolute;left:7.5px;top:8px;width:60px;height:35.5px;border-radius:4.5px;background:#6a1a2a;box-shadow:inset 1px 1.5px 1px rgba(255,255,255,.35),inset -1px -1px 1px rgba(0,0,0,.15)"></div></div><div class="a" style="left:2030px;top:2007px;width:75px;height:73.5px;border-radius:5px;background:linear-gradient(180deg,#949494,#6c6c6c);box-shadow:inset 0 0 0 1px rgba(170,170,170,.6)"><div style="position:absolute;left:7.5px;top:8px;width:60px;height:35.5px;border-radius:4.5px;background:#c81e4e;box-shadow:inset 1px 1.5px 1px rgba(255,255,255,.35),inset -1px -1px 1px rgba(0,0,0,.15)"></div></div><div class="a" style="left:2108px;top:2007px;width:75px;height:73.5px;border-radius:5px;background:linear-gradient(180deg,#949494,#6c6c6c);box-shadow:inset 0 0 0 1px rgba(170,170,170,.6)"><div style="position:absolute;left:7.5px;top:8px;width:60px;height:35.5px;border-radius:4.5px;background:#c080a8;box-shadow:inset 1px 1.5px 1px rgba(255,255,255,.35),inset -1px -1px 1px rgba(0,0,0,.15)"></div></div><div class="a" style="left:2186px;top:2007px;width:75px;height:73.5px;border-radius:5px;background:linear-gradient(180deg,#949494,#6c6c6c);box-shadow:inset 0 0 0 1px rgba(170,170,170,.6)"><div style="position:absolute;left:7.5px;top:8px;width:60px;height:35.5px;border-radius:4.5px;background:#6e5a94;box-shadow:inset 1px 1.5px 1px rgba(255,255,255,.35),inset -1px -1px 1px rgba(0,0,0,.15)"></div></div><div class="a" style="left:2264px;top:2007px;width:75px;height:73.5px;border-radius:5px;background:linear-gradient(180deg,#949494,#6c6c6c);box-shadow:inset 0 0 0 1px rgba(170,170,170,.6)"><div style="position:absolute;left:7.5px;top:8px;width:60px;height:35.5px;border-radius:4.5px;background:#ffccbe;box-shadow:inset 1px 1.5px 1px rgba(255,255,255,.35),inset -1px -1px 1px rgba(0,0,0,.15)"></div></div><div class="a" style="left:2342px;top:2007px;width:75px;height:73.5px;border-radius:5px;background:linear-gradient(180deg,#949494,#6c6c6c);box-shadow:inset 0 0 0 1px rgba(170,170,170,.6)"><div style="position:absolute;left:7.5px;top:8px;width:60px;height:35.5px;border-radius:4.5px;background:#e87000;box-shadow:inset 1px 1.5px 1px rgba(255,255,255,.35),inset -1px -1px 1px rgba(0,0,0,.15)"></div></div><div class="a" style="left:2420px;top:2007px;width:75px;height:73.5px;border-radius:5px;background:linear-gradient(180deg,#949494,#6c6c6c);box-shadow:inset 0 0 0 1px rgba(170,170,170,.6)"><div style="position:absolute;left:7.5px;top:8px;width:60px;height:35.5px;border-radius:4.5px;background:#404e98;box-shadow:inset 1px 1.5px 1px rgba(255,255,255,.35),inset -1px -1px 1px rgba(0,0,0,.15)"></div></div><div class="a" style="left:2498px;top:2007px;width:75px;height:73.5px;border-radius:5px;background:linear-gradient(180deg,#949494,#6c6c6c);box-shadow:inset 0 0 0 1px rgba(170,170,170,.6)"><div style="position:absolute;left:7.5px;top:8px;width:60px;height:35.5px;border-radius:4.5px;background:#cc404a;box-shadow:inset 1px 1.5px 1px rgba(255,255,255,.35),inset -1px -1px 1px rgba(0,0,0,.15)"></div></div><div class="a" style="left:2576px;top:2007px;width:75px;height:73.5px;border-radius:5px;background:linear-gradient(180deg,#949494,#6c6c6c);box-shadow:inset 0 0 0 1px rgba(170,170,170,.6)"><div style="position:absolute;left:7.5px;top:8px;width:60px;height:35.5px;border-radius:4.5px;background:#502456;box-shadow:inset 1px 1.5px 1px rgba(255,255,255,.35),inset -1px -1px 1px rgba(0,0,0,.15)"></div></div><div class="a" style="left:2654px;top:2007px;width:75px;height:73.5px;border-radius:5px;background:linear-gradient(180deg,#949494,#6c6c6c);box-shadow:inset 0 0 0 1px rgba(170,170,170,.6)"><div style="position:absolute;left:7.5px;top:8px;width:60px;height:35.5px;border-radius:4.5px;background:#aaba00;box-shadow:inset 1px 1.5px 1px rgba(255,255,255,.35),inset -1px -1px 1px rgba(0,0,0,.15)"></div></div><div class="a" style="left:2732px;top:2007px;width:75px;height:73.5px;border-radius:5px;background:linear-gradient(180deg,#949494,#6c6c6c);box-shadow:inset 0 0 0 1px rgba(170,170,170,.6)"><div style="position:absolute;left:7.5px;top:8px;width:60px;height:35.5px;border-radius:4.5px;background:#f0a000;box-shadow:inset 1px 1.5px 1px rgba(255,255,255,.35),inset -1px -1px 1px rgba(0,0,0,.15)"></div></div><div class="a" style="left:2810px;top:2007px;width:75px;height:73.5px;border-radius:5px;background:linear-gradient(180deg,#949494,#6c6c6c);box-shadow:inset 0 0 0 1px rgba(170,170,170,.6)"><div style="position:absolute;left:7.5px;top:8px;width:60px;height:35.5px;border-radius:4.5px;background:#d8ecb8;box-shadow:inset 1px 1.5px 1px rgba(255,255,255,.35),inset -1px -1px 1px rgba(0,0,0,.15)"></div></div><div class="a" style="left:2888px;top:2007px;width:75px;height:73.5px;border-radius:5px;background:linear-gradient(180deg,#949494,#6c6c6c);box-shadow:inset 0 0 0 1px rgba(170,170,170,.6)"><div style="position:absolute;left:7.5px;top:8px;width:60px;height:35.5px;border-radius:4.5px;background:#d00018;box-shadow:inset 1px 1.5px 1px rgba(255,255,255,.35),inset -1px -1px 1px rgba(0,0,0,.15)"></div></div><div class="a" style="left:2966px;top:2007px;width:75px;height:73.5px;border-radius:5px;background:linear-gradient(180deg,#949494,#6c6c6c);box-shadow:inset 0 0 0 1px rgba(170,170,170,.6)"><div style="position:absolute;left:7.5px;top:8px;width:60px;height:35.5px;border-radius:4.5px;background:#5a1e3a;box-shadow:inset 1px 1.5px 1px rgba(255,255,255,.35),inset -1px -1px 1px rgba(0,0,0,.15)"></div></div><div class="a" style="left:3044px;top:2007px;width:75px;height:73.5px;border-radius:5px;background:linear-gradient(180deg,#949494,#6c6c6c);box-shadow:inset 0 0 0 1px rgba(170,170,170,.6)"><div style="position:absolute;left:7.5px;top:8px;width:60px;height:35.5px;border-radius:4.5px;background:#782078;box-shadow:inset 1px 1.5px 1px rgba(255,255,255,.35),inset -1px -1px 1px rgba(0,0,0,.15)"></div></div><div class="a" style="left:3122px;top:2007px;width:75px;height:73.5px;border-radius:5px;background:linear-gradient(180deg,#949494,#6c6c6c);box-shadow:inset 0 0 0 1px rgba(170,170,170,.6)"><div style="position:absolute;left:7.5px;top:8px;width:60px;height:35.5px;border-radius:4.5px;background:#003a66;box-shadow:inset 1px 1.5px 1px rgba(255,255,255,.35),inset -1px -1px 1px rgba(0,0,0,.15)"></div></div><div class="a" style="left:3200px;top:2007px;width:75px;height:73.5px;border-radius:5px;background:linear-gradient(180deg,#949494,#6c6c6c);box-shadow:inset 0 0 0 1px rgba(170,170,170,.6)"><div style="position:absolute;left:7.5px;top:8px;width:60px;height:35.5px;border-radius:4.5px;background:#c0e4c4;box-shadow:inset 1px 1.5px 1px rgba(255,255,255,.35),inset -1px -1px 1px rgba(0,0,0,.15)"></div></div><div class="a" style="left:3278px;top:2007px;width:75px;height:73.5px;border-radius:5px;background:linear-gradient(180deg,#949494,#6c6c6c);box-shadow:inset 0 0 0 1px rgba(170,170,170,.6)"><div style="position:absolute;left:7.5px;top:8px;width:60px;height:35.5px;border-radius:4.5px;background:#102a80;box-shadow:inset 1px 1.5px 1px rgba(255,255,255,.35),inset -1px -1px 1px rgba(0,0,0,.15)"></div></div>
<div class="t" style="left:18.7px;top:2061.0px;font-size:15.3px;color:#2c2c2c;font-weight:700;">White</div>
<div class="t" style="left:109.0px;top:2061.0px;font-size:15.3px;color:#2c2c2c;font-weight:700;">6J</div>
<div class="t" style="left:186.6px;top:2061.0px;font-size:15.3px;color:#2c2c2c;font-weight:700;">5F</div>
<div class="t" style="left:267.1px;top:2061.0px;font-size:15.3px;color:#2c2c2c;font-weight:700;">6I</div>
<div class="t" style="left:341.7px;top:2061.0px;font-size:15.3px;color:#2c2c2c;font-weight:700;">6K</div>
<div class="t" style="left:419.3px;top:2061.0px;font-size:15.3px;color:#2c2c2c;font-weight:700;">5G</div>
<div class="t" style="left:497.7px;top:2061.0px;font-size:15.3px;color:#2c2c2c;font-weight:700;">6H</div>
<div class="t" style="left:575.7px;top:2061.0px;font-size:15.3px;color:#2c2c2c;font-weight:700;">5H</div>
<div class="t" style="left:653.7px;top:2061.0px;font-size:15.3px;color:#2c2c2c;font-weight:700;">7K</div>
<div class="t" style="left:731.3px;top:2061.0px;font-size:15.3px;color:#2c2c2c;font-weight:700;">6G</div>
<div class="t" style="left:813.1px;top:2061.0px;font-size:15.3px;color:#2c2c2c;font-weight:700;">5I</div>
<div class="t" style="left:888.6px;top:2061.0px;font-size:15.3px;color:#2c2c2c;font-weight:700;">6F</div>
<div class="t" style="left:965.7px;top:2061.0px;font-size:15.3px;color:#2c2c2c;font-weight:700;">8K</div>
<div class="t" style="left:1045.0px;top:2061.0px;font-size:15.3px;color:#2c2c2c;font-weight:700;">5J</div>
<div class="t" style="left:1111.1px;top:2061.0px;font-size:15.3px;color:#2c2c2c;font-weight:700;">Black</div>
<div class="t" style="left:1199.7px;top:2061.0px;font-size:15.3px;color:#2c2c2c;font-weight:700;">2B</div>
<div class="t" style="left:1277.7px;top:2061.0px;font-size:15.3px;color:#2c2c2c;font-weight:700;">2C</div>
<div class="t" style="left:1355.7px;top:2061.0px;font-size:15.3px;color:#2c2c2c;font-weight:700;">2D</div>
<div class="t" style="left:1434.1px;top:2061.0px;font-size:15.3px;color:#2c2c2c;font-weight:700;">2E</div>
<div class="t" style="left:1512.6px;top:2061.0px;font-size:15.3px;color:#2c2c2c;font-weight:700;">2F</div>
<div class="t" style="left:1589.3px;top:2061.0px;font-size:15.3px;color:#2c2c2c;font-weight:700;">2G</div>
<div class="t" style="left:1667.7px;top:2061.0px;font-size:15.3px;color:#2c2c2c;font-weight:700;">2H</div>
<div class="t" style="left:1749.1px;top:2061.0px;font-size:15.3px;color:#2c2c2c;font-weight:700;">2I</div>
<div class="t" style="left:1825.0px;top:2061.0px;font-size:15.3px;color:#2c2c2c;font-weight:700;">2J</div>
<div class="t" style="left:1901.7px;top:2061.0px;font-size:15.3px;color:#2c2c2c;font-weight:700;">2K</div>
<div class="t" style="left:1980.6px;top:2061.0px;font-size:15.3px;color:#2c2c2c;font-weight:700;">2L</div>
<div class="t" style="left:2056.9px;top:2061.0px;font-size:15.3px;color:#2c2c2c;font-weight:700;">2M</div>
<div class="t" style="left:2135.7px;top:2061.0px;font-size:15.3px;color:#2c2c2c;font-weight:700;">3B</div>
<div class="t" style="left:2213.7px;top:2061.0px;font-size:15.3px;color:#2c2c2c;font-weight:700;">3C</div>
<div class="t" style="left:2291.7px;top:2061.0px;font-size:15.3px;color:#2c2c2c;font-weight:700;">3D</div>
<div class="t" style="left:2370.1px;top:2061.0px;font-size:15.3px;color:#2c2c2c;font-weight:700;">3E</div>
<div class="t" style="left:2448.6px;top:2061.0px;font-size:15.3px;color:#2c2c2c;font-weight:700;">3F</div>
<div class="t" style="left:2525.3px;top:2061.0px;font-size:15.3px;color:#2c2c2c;font-weight:700;">3G</div>
<div class="t" style="left:2603.7px;top:2061.0px;font-size:15.3px;color:#2c2c2c;font-weight:700;">3H</div>
<div class="t" style="left:2685.1px;top:2061.0px;font-size:15.3px;color:#2c2c2c;font-weight:700;">3I</div>
<div class="t" style="left:2761.0px;top:2061.0px;font-size:15.3px;color:#2c2c2c;font-weight:700;">3J</div>
<div class="t" style="left:2837.7px;top:2061.0px;font-size:15.3px;color:#2c2c2c;font-weight:700;">3K</div>
<div class="t" style="left:2916.6px;top:2061.0px;font-size:15.3px;color:#2c2c2c;font-weight:700;">3L</div>
<div class="t" style="left:2992.9px;top:2061.0px;font-size:15.3px;color:#2c2c2c;font-weight:700;">3M</div>
<div class="t" style="left:3071.7px;top:2061.0px;font-size:15.3px;color:#2c2c2c;font-weight:700;">4B</div>
<div class="t" style="left:3149.7px;top:2061.0px;font-size:15.3px;color:#2c2c2c;font-weight:700;">4C</div>
<div class="t" style="left:3227.7px;top:2061.0px;font-size:15.3px;color:#2c2c2c;font-weight:700;">4D</div>
<div class="t" style="left:3306.1px;top:2061.0px;font-size:15.3px;color:#2c2c2c;font-weight:700;">4E</div>
<div class="a" style="left:0;top:2081.5px;width:3354px;height:18.5px;background:#636363"></div>
<div class="a" style="left:22px;top:2083.5px;width:1392px;height:15px;border-radius:7.5px;background:#444"></div>
<div class="a" style="left:2.5px;top:2083.5px;width:15px;height:15px;border-radius:3px;background:#8a8a8a"></div><svg class="a" style="left:6px;top:2086px" width="8" height="10" viewBox="0 0 8 10"><path d="M7.5,0L0.5,5 7.5,10Z" fill="#444"/></svg>
<div class="a" style="left:3338.5px;top:2083.5px;width:14px;height:15px;border-radius:3px;background:#8a8a8a"></div><svg class="a" style="left:3342px;top:2086px" width="8" height="10" viewBox="0 0 8 10"><path d="M0.5,0L7.5,5 0.5,10Z" fill="#444"/></svg>
<div class="a" style="left:3355px;top:2007px;width:72px;height:27px;border-radius:5px 5px 0 0;background:linear-gradient(180deg,#989898,#828282);box-shadow:inset 0 0 0 1px rgba(170,170,170,.5)"></div>
<div class="a" style="left:3381px;top:2009px;width:22px;height:22px;border-radius:50%;background:linear-gradient(180deg,#6c6c6c,#9a9a9a)"></div><svg class="a" style="left:3385px;top:2015px" width="14" height="8" viewBox="0 0 14 8"><path d="M0.5,7.5H13.5L7,0.5Z" fill="#3a3a3a"/></svg>
<div class="a" style="left:3355px;top:2035.7px;width:72px;height:62.3px;background:linear-gradient(180deg,#808080,#666);box-shadow:inset 0 0 0 1px rgba(150,150,150,.5)"></div>
<div class="a" style="left:3369px;top:2044.4px;width:45px;height:44.6px;box-sizing:border-box;border-radius:7px;border:3px solid #2a2a2a;background:linear-gradient(180deg,#c4c4c4 0,#bcbcbc 50%,#a4a4a4 50%,#9c9c9c 100%)"><div style="position:absolute;left:9.5px;top:9.5px;width:20px;height:20px;background:linear-gradient(180deg,#222 0,#222 50%,#000 50%)"></div></div>
<div class="a" style="left:3429px;top:2007px;width:68.59999999999991px;height:45px;background:linear-gradient(180deg,#b4b4b4,#747474)"></div><div class="a" style="left:3448.8px;top:2014.5px;width:29px;height:29px;border-radius:50%;background:linear-gradient(180deg,#7c7c7c,#a4a4a4)"></div>
<div class="a" style="left:3457.8px;top:2023.5px;width:11px;height:11px;background:#333"></div>
<div class="a" style="left:3498px;top:2007px;width:67.69999999999982px;height:45px;background:linear-gradient(180deg,#484848,#2e2e2e)"></div><div class="a" style="left:3517.35px;top:2014.5px;width:29px;height:29px;border-radius:50%;background:linear-gradient(180deg,#2c2c2c,#444)"></div>
<svg class="a" style="left:3526.85px;top:2022px" width="13" height="14" viewBox="0 0 13 14"><path d="M0.5,0.5L12.5,7 0.5,13.5Z" fill="#1e1e1e"/></svg>
<div class="a" style="left:3566.7px;top:2007px;width:66.10000000000036px;height:45px;background:linear-gradient(180deg,#b4b4b4,#747474)"></div><div class="a" style="left:3585.25px;top:2014.5px;width:29px;height:29px;border-radius:50%;background:linear-gradient(180deg,#7c7c7c,#a4a4a4)"></div>
<div class="t" style="left:3589.8px;top:2021.3px;font-size:15px;color:#333;font-weight:700;">[··]</div>
<div class="a" style="left:3633.5px;top:2007px;width:66.5px;height:45px;background:linear-gradient(180deg,#484848,#2e2e2e)"></div><div class="a" style="left:3652.25px;top:2014.5px;width:29px;height:29px;border-radius:50%;background:linear-gradient(180deg,#2c2c2c,#444)"></div>
<div class="t" style="left:3661.0px;top:2017.4px;font-size:22px;color:#1e1e1e;font-weight:700;font-family:"DejaVu Sans",sans-serif;">∞</div>
<div class="a" style="left:3700.9px;top:2007px;width:67.29999999999973px;height:45px;background:linear-gradient(180deg,#484848,#2e2e2e)"></div><div class="a" style="left:3720.05px;top:2014.5px;width:29px;height:29px;border-radius:50%;background:linear-gradient(180deg,#2c2c2c,#444)"></div>
<svg class="a" style="left:3725.55px;top:2020px" width="18" height="18" viewBox="-9 -9 18 18"><g fill="none" stroke="#1e1e1e" stroke-width="3"><path d="M-6,-1.5A6.2,6.2 0 0 1 5.2,-3.4"/><path d="M6,1.5A6.2,6.2 0 0 1 -5.2,3.4"/></g><path d="M2.5,-6.5L8,-5.5 6,-0.5Z M-2.5,6.5L-8,5.5 -6,0.5Z" fill="#1e1e1e"/></svg>
<div class="a" style="left:3769px;top:2007px;width:68.5px;height:45px;background:linear-gradient(180deg,#7e7e7e,#4e4e4e)"></div><div class="a" style="left:3776px;top:2013.5px;width:55px;height:30px;border-radius:15px;background:linear-gradient(180deg,#6a6a6a,#9a9a9a)"></div>
<div class="t" style="left:3781.0px;top:2021.3px;font-size:18px;color:#333;font-weight:700;transform:scaleX(0.9436);">SAVE</div>
<div class="a" style="left:3429px;top:2053px;width:204px;height:45px;border-radius:4px 0 0 0;background:linear-gradient(180deg,#b8b8b8,#7c7c7c);box-shadow:inset 0 1px 0 #d0d0d0"></div>
<div class="a" style="left:3634px;top:2053px;width:203.5px;height:45px;border-radius:0 4px 0 0;background:linear-gradient(180deg,#b8b8b8,#7c7c7c);box-shadow:inset 0 1px 0 #d0d0d0,inset 1px 0 0 #666"></div>
<div class="a" style="left:3460px;top:2061.5px;width:29px;height:29px;border-radius:50%;background:linear-gradient(180deg,#8a8a8a,#b4b4b4)"></div><div class="a" style="left:3780.5px;top:2061.5px;width:29px;height:29px;border-radius:50%;background:linear-gradient(180deg,#8a8a8a,#b4b4b4)"></div>
<div class="t" style="left:3468.4px;top:2064.4px;font-size:22px;color:#444;font-weight:700;">«</div>
<div class="t" style="left:3788.9px;top:2064.4px;font-size:22px;color:#444;font-weight:700;">»</div>
<div class="t" style="left:3515.5px;top:2060.1px;font-size:33px;color:#3a3a3a;font-weight:700;transform:scaleX(0.9634);text-shadow:0 1px 0 rgba(220,220,220,.7);">Back</div>
<div class="t" style="left:3675.8px;top:2060.1px;font-size:33px;color:#3a3a3a;font-weight:700;transform:scaleX(1.0765);text-shadow:0 1px 0 rgba(220,220,220,.7);">Next</div>
</body></html>
